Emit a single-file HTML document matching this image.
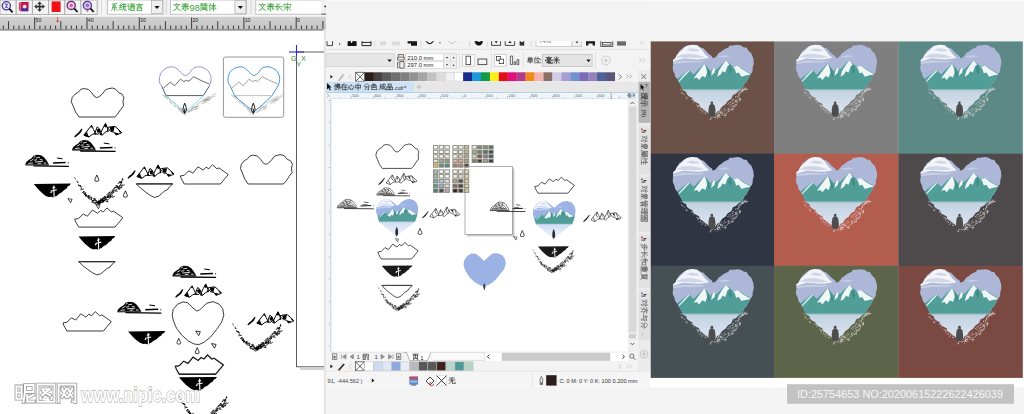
<!DOCTYPE html><html><head><meta charset="utf-8"><style>html,body{margin:0;padding:0}body{width:1024px;height:414px;overflow:hidden;background:#f4f4f4}svg{position:absolute;left:0;top:0;font-family:"Liberation Sans",sans-serif}</style></head><body>
<svg width="1024" height="414" viewBox="0 0 1024 414">
<defs>
<path id="ht" d="M8,29 L4.6,24 L2.2,18.2 L0.3,13.8 L1.2,9.5 L4.1,6.1 L7.5,4.1 L9.9,1.2 L13.3,0.6 L17.7,1.5 L20.6,4.6 L23,8 L25.4,9.5 L27.8,9 L31.2,6.1 L34.6,1.7 L38,0.6 L41.3,0 L44.7,1.2 L47.6,4.6 L51,6.1 L52.9,9.5 L52,13.3 L52.5,17.7 L49.6,21.5 L46.7,25.9 L43.8,29 Z"/>
<path id="mo" d="M4.3,19.6 L40.6,19.6 L48.5,10.2 L39.1,3.6 L36.9,4.4 L32.6,0.4 L29,4.4 L26.1,2.9 L23.2,5.8 L18.1,2.5 L13,8.7 L8.7,6.5 L4.3,10.9 L0.3,11.6 L1.4,14.5 Z"/>
<path id="lo" d="M0,0.5 L36.4,0.5 L34.5,2.5 L32.5,4 L31.5,6 L28.5,7.5 L25,10.5 L22,13 L18,14 L14,12 L9,8.5 L4,4.5 Z"/>
<path id="hf" d="M24.3,9.3 L19.8,5.5 L15.3,1 L10.8,0.3 L5.5,2.5 L1,7.8 L0,13.8 L1.4,19.8 L4.4,26.8 L9.6,33.6 L16.5,39.6 L22,42.4 L26.6,43 L32,40.6 L38.4,35.4 L44.6,27.6 L49.4,20.5 L51.6,13.8 L50.5,7 L46.8,2.5 L40.8,0 L34.8,1.5 L30.3,5.5 L27.3,8.5 Z"/>
<g id="lb"><path d="M0,0.7 L37,0.3 L35.8,2.2 L34,3 L33,5 L30.5,6.6 L28,9 L25,10.6 L23,12.6 L21.4,13 L21,14 L19,14 L17.6,13.4 L15,13.8 L12,12.6 L9.4,10.6 L6.4,8 L3.6,5 L1.4,2.4 Z" fill="#000"/><path d="M20,2.2 L20.3,14.2 M17,7.8 L23,6.4 M18.6,4.6L21.5,4 M16.5,9.2L18,8.8" stroke="#fff" stroke-width="1.1" fill="none"/></g>
<path id="dr" d="M2.4,0 L4.4,4.6 Q4.8,6.4 2.4,6.4 Q0,6.4 0.4,4.6 Z" fill="#fff" stroke="#000" stroke-width="0.8"/>
<path id="tr" d="M0,0 L4.6,0.8 L3,4.6 Z" fill="#fff" stroke="#000" stroke-width="0.8"/>
<g id="ms"><path d="M0.2,13.6 L2,11.5 L4,10 L6,7.5 L7.8,5.6 L8.5,6.4 L6.8,9.6 L4.8,11.6 L2.6,13.2 L1,14.4 Z" fill="#000"/><path d="M9.9,12.1 L17.5,2.3 L19.5,6.5 L21.4,10.3 L18,11.5 L14.9,14 Z" fill="#fff" stroke="#000" stroke-width="1"/><path d="M9.6,12.4 L13,8.6 L13.6,11 L15.2,14.2 L12,13.4 Z M17.5,2 L18.4,4.6 L16.4,4.2Z" fill="#000"/><path d="M20.6,10.8 L23.2,3.9 L25.6,6 L26.6,9 L24,11.2 Z" fill="#fff" stroke="#000" stroke-width="1"/><path d="M22.6,6.6 L25.6,5.6 L26.4,9.2 L23.4,9.8 Z M20,11.6 L22,9 L22.4,11.4Z" fill="#000"/><path d="M26,11.4 L29,5 L31.5,0.4 L33,3.5 L34.2,7.6 L31,9.5 L28,12.2 Z" fill="#fff" stroke="#000" stroke-width="1"/><path d="M29.8,3 L31.5,0 L33.2,3.8 L31.4,4.4Z M26,11.8 L27.4,9 L28.6,11.8Z M33,6 L35,8.4 L33.4,9Z" fill="#000"/><path d="M33.5,4.5 L37.2,3.7 L41,3.4 L44,6 L47.7,9.7 L45,11 L42,11.9 L40,9 L37,8.5 L35,6.6 Z" fill="#fff" stroke="#000" stroke-width="1"/><path d="M35.6,4.2 L40.6,3.8 L39.6,8.2 L36.8,8 Z M40.6,9.4 L44.8,10.2 L42,12.4 Z M44,6L47.9,9.8L45.6,9.4Z" fill="#000"/></g>
<g id="cs"><path d="M0,9.8 L1.5,7 L4,5 L6.5,3.5 L8.5,1 L12,0 L16,0.5 L19,2.5 L21,5 L23.4,8.6 L23.6,9.8 L12,9.6 Z" fill="#000"/><path d="M10,7.2 L18,6.5 M5,6.4 L8.4,4.4 M11,3.2 L15,2.4 M3.4,8.6L8,8.2 M14.6,4.6L17.6,5.2 M9,5.4 L12,5 M18.6,8.2 L21.4,8.4 M12.6,8.6 L16.4,8.4 M8.6,2.4 L10.4,1.6" stroke="#fff" stroke-width="0.85" fill="none"/><path d="M8.4,11.1 L43.8,11.5" stroke="#000" stroke-width="1.3"/><path d="M0.4,10.2 L24,10.2" stroke="#000" stroke-width="0.9"/><path d="M28,8.1 L40.7,7.6" stroke="#000" stroke-width="1.5"/><path d="M32,3.2 L37.6,4 M42.8,8 L43.8,8" stroke="#000" stroke-width="1"/></g>
<g id="msl"><path d="M0.2,13.6 L4,10 L7.8,5.6 L8.5,6.4 L4.8,11.6 L1,14.4 Z" fill="#000"/><path d="M9.9,12.1 L17.5,2.3 L19.5,6.5 L21.4,10.3 L18,11.5 L14.9,14 Z M12.6,9 L15,14 M17.5,2.3 L16.6,7 L19,9" fill="none" stroke="#000" stroke-width="0.75"/><path d="M20.6,10.8 L23.2,3.9 L25.6,6 L26.6,9 L24,11.2 Z M23.2,3.9 L24,8 " fill="none" stroke="#000" stroke-width="0.75"/><path d="M26,11.4 L29,5 L31.5,0.4 L33,3.5 L34.2,7.6 L31,9.5 L28,12.2 Z M31.5,0.4 L30.6,5 L32.4,8.6" fill="none" stroke="#000" stroke-width="0.75"/><path d="M33.5,4.5 L37.2,3.7 L41,3.4 L44,6 L47.7,9.7 L45,11 L42,11.9 L40,9 L37,8.5 L35,6.6 Z M37.2,3.7 L39.6,8 M41,3.4 L43,8 L45,11" fill="none" stroke="#000" stroke-width="0.75"/><path d="M36.4,4.4 L39.4,4.2 L39,7 Z M41,9.6 L44,10.4 L42,12 Z" fill="#000"/></g>
<g id="csl"><path d="M0,9.8 L1.5,7 L4,5 L6.5,3.5 L8.5,1 L12,0 L16,0.5 L19,2.5 L21,5 L23.4,8.6 M2,9 L5,6 L9,3 L13,2 L17,4 L20,7.4 M4.6,9 L8,5.6 L12,4 L16,6 L18.4,8.6 M7,9 L10.6,6.4 L14,6.6 L16,9 M10,0.6 L12,5 L14,9 M6.6,3.6 L9,7 M16,0.6 L15,5 M1,9.4 H23 M3,8 H21" fill="none" stroke="#000" stroke-width="0.7"/><path d="M0,10.3 L24,10.3" stroke="#000" stroke-width="0.9"/><path d="M8.4,11.2 L43.8,11.5" stroke="#000" stroke-width="1"/><path d="M28,8.1 L40.7,7.6" stroke="#000" stroke-width="1.2"/><path d="M32,3.2 L37.6,4 M30,6.6 L36,6.4 M42.8,8 L43.8,8" stroke="#000" stroke-width="0.8"/></g>
<g id="vr"><path d="M-23.1,-25.6l0.8,0.3M-22.7,-24.7l0.7,0.4M-21.0,-22.2l1.1,-0.2M-20.6,-21.1l1.5,0.1M-19.2,-18.9l0.5,0.5M-18.9,-18.6l-0.3,1.0M-18.4,-18.2l1.3,1.1M-18.3,-17.3l1.5,-0.5M-18.0,-17.8l1.1,0.3M-17.2,-17.0l1.2,0.2M-17.1,-15.4l1.0,-0.0M-16.6,-15.2l0.7,0.1M-16.2,-14.5l-0.6,1.4M-15.6,-13.8l1.7,-0.6M-14.1,-11.9l0.8,0.4M-14.9,-11.3l-0.1,0.9M-14.7,-11.7l1.3,-0.1M-13.3,-11.8l-0.8,1.5M-12.9,-11.0l0.8,0.4M-13.6,-10.3l0.0,1.1M-12.3,-9.9l-0.9,1.5M-12.6,-10.5l0.1,1.0M-12.8,-10.4l0.7,-0.3M-12.3,-8.9l0.4,1.8M-12.2,-10.0l-0.9,1.6M-12.3,-8.9l0.9,0.1M-11.5,-8.6l-0.5,1.6M-10.8,-7.8l-0.0,0.8M-11.0,-9.1l0.0,1.6M-10.0,-7.1l-0.0,1.1M-9.4,-7.4l1.0,0.6M-11.0,-6.8l0.9,-0.0M-9.2,-6.4l-0.0,0.9M-9.6,-8.2l0.4,1.1M-9.1,-7.0l1.7,-0.8M-8.3,-6.0l-0.5,1.1M-9.5,-7.3l1.0,0.1M-9.0,-7.4l0.5,0.9M-8.7,-6.0l-0.4,1.1M-7.2,-6.0l-0.4,1.1M-9.4,-6.0l0.8,1.1M-7.0,-6.5l0.7,0.0M-7.5,-5.9l1.1,1.1M-6.6,-6.4l0.9,1.1M-7.8,-4.2l0.5,0.8M-6.1,-3.6l0.9,1.0M-6.7,-4.6l1.1,0.9M-6.4,-4.6l0.3,1.2M-5.1,-2.9l-0.6,1.4M-4.6,-3.1l1.3,0.3M-6.0,-5.3l0.8,-0.1M-5.0,-2.9l0.8,0.1M-4.6,-3.1l-0.3,0.8M-3.5,-4.4l1.8,-0.2M-4.9,-1.6l-0.5,1.1M-4.9,-3.1l-0.1,0.9M-5.0,-2.2l0.9,0.4M-4.4,-4.5l1.2,-0.6M-3.9,-4.2l1.3,0.6M-2.0,-3.9l-0.8,1.4M-2.5,-3.2l0.7,0.2M-1.8,-1.0l1.2,-0.2M-1.5,-1.8l0.9,0.2M-4.6,-1.2l0.2,0.8M-0.9,-1.2l0.6,0.5M-1.0,-3.3l-0.0,0.8M-2.8,-1.2l-0.3,1.2M-3.5,-1.2l-0.4,1.0M-3.1,-3.0l0.8,0.1M-2.3,0.1l1.1,0.1M-2.7,-1.5l1.2,0.4M-3.1,0.3l0.9,-0.4M-1.0,1.3l0.5,0.8M-0.9,-0.4l1.7,-0.3M-0.4,0.5l-0.2,1.2M1.3,0.8l-0.5,1.0M-0.7,-2.0l0.4,1.1M1.3,-1.7l-0.0,-2.0M1.5,-0.9l2.2,-0.1M3.1,-2.1l0.6,-1.4M4.8,-3.1l2.3,0.5M21.6,-21.0l0.6,-1.2M9.7,-8.1l0.8,-0.7M3.2,-3.9l0.0,-1.4M5.7,-1.7l0.5,-1.7M14.1,-11.0l2.1,-0.6M24.7,-23.3l0.3,-1.9M20.6,-14.4l1.8,0.1M2.9,-0.0l1.3,-1.0M20.1,-14.6l1.9,-1.2M3.5,-3.1l-0.1,-1.0M20.2,-15.0l1.5,-1.0M11.1,-5.9l-0.3,-2.1M12.3,-8.2l0.8,-0.4M0.4,0.2l0.7,-1.8M23.8,-20.1l1.0,-0.9M16.0,-15.1l1.6,-0.9M4.6,-3.8l1.3,-0.3M1.1,0.1l0.7,-1.7M5.1,-4.0l1.2,-1.0M23.1,-20.0l0.6,-2.3M9.1,-6.5l2.3,-0.2M3.7,-2.7l1.1,0.2M12.4,-6.7l1.0,0.2M22.7,-17.7l1.1,-0.4M0.2,-0.5l-0.2,-1.6M2.9,-2.2l0.7,-1.1M18.9,-12.0l1.0,-0.0M21.2,-15.9l0.6,-1.3M11.7,-10.6l0.8,-1.3M2.4,-1.2l1.3,-0.1M4.3,-0.5l0.8,-0.7M22.7,-15.5l1.8,-0.2M12.7,-7.6l0.8,-0.2M15.4,-11.1l1.1,-0.5M1.4,-0.1l1.0,-1.0M23.1,-20.6l0.7,-1.7M6.5,-2.3l0.2,-1.0M12.4,-6.4l0.6,-2.2M1.7,-2.0l0.2,-0.9M5.3,-1.0l0.6,-1.6M7.6,-5.2l1.0,-1.3M0.0,-0.3l0.9,-2.2M12.8,-10.6l1.1,0.0M9.2,-2.5l1.6,-1.7M0.9,-0.1l-0.2,-1.9M14.6,-6.6l-0.2,-1.4M18.7,-18.0l1.2,0.3M11.9,-5.9l2.2,-0.8M15.8,-12.1l1.2,-1.2M3.4,-3.1l1.8,0.2M3.2,-3.6l1.7,-0.8M9.8,-6.2l1.2,-0.8M0.9,0.3l0.7,-1.4M20.1,-15.4l0.8,-0.8M15.9,-10.7l0.4,-0.7M10.1,-5.9l0.7,-1.7M0.7,-0.7l0.7,-1.3M17.4,-12.3l1.6,-0.4M4.7,-1.8l1.2,-0.1M4.3,-3.7l1.6,0.3M6.8,-5.0l2.1,-0.9M2.3,-3.0l1.0,0.2M8.6,-1.9l2.2,0.2M24.2,-18.1l0.5,-1.0M0.1,-0.4l1.3,-0.5M2.3,0.2l-0.2,-1.2M1.5,0.1l1.1,0.2M19.1,-15.9l0.6,-0.7M23.7,-20.9l0.3,-1.3M6.2,-6.6l2.0,-0.2M1.3,0.6l1.2,0.1M6.8,-4.2l0.9,-2.2M14.1,-10.7l0.6,-1.1M20.2,-19.9l2.1,-1.0M9.2,-6.9l2.3,0.4M7.3,-3.3l1.7,-1.5M17.3,-13.4l2.0,-0.2M4.4,-4.2l1.1,-1.7M15.4,-12.8l0.3,-0.9M7.8,-4.0l2.2,0.5M1.5,-0.5l0.1,-1.6M4.5,-1.0l1.1,-1.4M21.3,-17.1l0.9,-0.4M10.8,-9.0l1.1,-1.6M4.5,-2.6l0.3,-2.2M6.7,-2.8l1.6,0.4M14.3,-8.4l0.9,0.2M19.0,-17.7l0.9,0.1M4.3,-1.7l1.7,0.4M21.7,-14.8l0.8,-0.9M0.9,-0.9l1.5,-0.9M2.4,-0.4l0.3,-1.2M3.9,-2.5l-0.2,-1.3M5.9,-4.6l0.5,-2.0M1.7,-1.6l1.0,-1.4M2.0,-1.6l1.4,-0.5M22.6,-20.4l0.8,-1.5M19.3,-15.8l1.3,0.4M3.2,-0.4l-0.3,-2.2M6.6,-6.6l1.5,0.1M9.9,-6.7l2.0,-1.0M6.3,-3.6l0.8,-0.7M23.5,-16.9l0.1,-1.6M4.6,-1.5l0.2,-2.3M1.4,0.1l1.4,0.2M18.2,-15.8l0.3,-2.0M18.9,-16.6l1.1,-0.1M9.7,-5.5l0.6,-0.8" stroke="#000" stroke-width="0.9" fill="none"/><path d="M22.9,-20.5l2.7,-3.8M20.8,-16.2l2.9,-3.8M11.0,-6.3l3.4,-3.3M14.5,-9.5l2.2,-2.1M10.0,-7.7l4.4,-3.0M13.9,-12.0l2.0,-2.7M14.5,-11.5l2.3,-2.1M16.5,-14.7l3.8,-2.5M14.5,-5.7l3.0,-1.6M21.3,-14.8l3.0,-1.9M24.1,-17.1l3.0,-1.7M5.5,-1.8l3.7,-3.8M10.9,-4.5l2.9,-1.8M8.8,-8.1l3.0,-3.4" stroke="#000" stroke-width="0.7" fill="none"/></g>
<g id="vrl"><path d="M-23.1,-25.6l0.8,0.3M-22.7,-24.7l0.7,0.4M-21.0,-22.2l1.1,-0.2M-20.6,-21.1l1.5,0.1M-19.2,-18.9l0.5,0.5M-18.9,-18.6l-0.3,1.0M-18.4,-18.2l1.3,1.1M-18.3,-17.3l1.5,-0.5M-18.0,-17.8l1.1,0.3M-17.2,-17.0l1.2,0.2M-17.1,-15.4l1.0,-0.0M-16.6,-15.2l0.7,0.1M-16.2,-14.5l-0.6,1.4M-15.6,-13.8l1.7,-0.6M-14.1,-11.9l0.8,0.4M-14.9,-11.3l-0.1,0.9M-14.7,-11.7l1.3,-0.1M-13.3,-11.8l-0.8,1.5M-12.9,-11.0l0.8,0.4M-13.6,-10.3l0.0,1.1M-12.3,-9.9l-0.9,1.5M-12.6,-10.5l0.1,1.0M-12.8,-10.4l0.7,-0.3M-12.3,-8.9l0.4,1.8M-12.2,-10.0l-0.9,1.6M-12.3,-8.9l0.9,0.1M-11.5,-8.6l-0.5,1.6M-10.8,-7.8l-0.0,0.8M-11.0,-9.1l0.0,1.6M-10.0,-7.1l-0.0,1.1M-9.4,-7.4l1.0,0.6M-11.0,-6.8l0.9,-0.0M-9.2,-6.4l-0.0,0.9M-9.6,-8.2l0.4,1.1M-9.1,-7.0l1.7,-0.8M-8.3,-6.0l-0.5,1.1M-9.5,-7.3l1.0,0.1M-9.0,-7.4l0.5,0.9M-8.7,-6.0l-0.4,1.1M-7.2,-6.0l-0.4,1.1M-9.4,-6.0l0.8,1.1M-7.0,-6.5l0.7,0.0M-7.5,-5.9l1.1,1.1M-6.6,-6.4l0.9,1.1M-7.8,-4.2l0.5,0.8M-6.1,-3.6l0.9,1.0M-6.7,-4.6l1.1,0.9M-6.4,-4.6l0.3,1.2M-5.1,-2.9l-0.6,1.4M-4.6,-3.1l1.3,0.3M-6.0,-5.3l0.8,-0.1M-5.0,-2.9l0.8,0.1M-4.6,-3.1l-0.3,0.8M-3.5,-4.4l1.8,-0.2M-4.9,-1.6l-0.5,1.1M-4.9,-3.1l-0.1,0.9M-5.0,-2.2l0.9,0.4M-4.4,-4.5l1.2,-0.6M-3.9,-4.2l1.3,0.6M-2.0,-3.9l-0.8,1.4M-2.5,-3.2l0.7,0.2M-1.8,-1.0l1.2,-0.2M-1.5,-1.8l0.9,0.2M-4.6,-1.2l0.2,0.8M-0.9,-1.2l0.6,0.5M-1.0,-3.3l-0.0,0.8M-2.8,-1.2l-0.3,1.2M-3.5,-1.2l-0.4,1.0M-3.1,-3.0l0.8,0.1M-2.3,0.1l1.1,0.1M-2.7,-1.5l1.2,0.4M-3.1,0.3l0.9,-0.4M-1.0,1.3l0.5,0.8M-0.9,-0.4l1.7,-0.3M-0.4,0.5l-0.2,1.2M1.3,0.8l-0.5,1.0M-0.7,-2.0l0.4,1.1M1.3,-1.7l-0.0,-2.0M1.5,-0.9l2.2,-0.1M3.1,-2.1l0.6,-1.4M4.8,-3.1l2.3,0.5M21.6,-21.0l0.6,-1.2M9.7,-8.1l0.8,-0.7M3.2,-3.9l0.0,-1.4M5.7,-1.7l0.5,-1.7M14.1,-11.0l2.1,-0.6M24.7,-23.3l0.3,-1.9M20.6,-14.4l1.8,0.1M2.9,-0.0l1.3,-1.0M20.1,-14.6l1.9,-1.2M3.5,-3.1l-0.1,-1.0M20.2,-15.0l1.5,-1.0M11.1,-5.9l-0.3,-2.1M12.3,-8.2l0.8,-0.4M0.4,0.2l0.7,-1.8M23.8,-20.1l1.0,-0.9M16.0,-15.1l1.6,-0.9M4.6,-3.8l1.3,-0.3M1.1,0.1l0.7,-1.7M5.1,-4.0l1.2,-1.0M23.1,-20.0l0.6,-2.3M9.1,-6.5l2.3,-0.2M3.7,-2.7l1.1,0.2M12.4,-6.7l1.0,0.2M22.7,-17.7l1.1,-0.4M0.2,-0.5l-0.2,-1.6M2.9,-2.2l0.7,-1.1M18.9,-12.0l1.0,-0.0M21.2,-15.9l0.6,-1.3M11.7,-10.6l0.8,-1.3M2.4,-1.2l1.3,-0.1M4.3,-0.5l0.8,-0.7M22.7,-15.5l1.8,-0.2M12.7,-7.6l0.8,-0.2M15.4,-11.1l1.1,-0.5M1.4,-0.1l1.0,-1.0M23.1,-20.6l0.7,-1.7M6.5,-2.3l0.2,-1.0M12.4,-6.4l0.6,-2.2M1.7,-2.0l0.2,-0.9M5.3,-1.0l0.6,-1.6M7.6,-5.2l1.0,-1.3M0.0,-0.3l0.9,-2.2M12.8,-10.6l1.1,0.0M9.2,-2.5l1.6,-1.7M0.9,-0.1l-0.2,-1.9M14.6,-6.6l-0.2,-1.4M18.7,-18.0l1.2,0.3M11.9,-5.9l2.2,-0.8M15.8,-12.1l1.2,-1.2M3.4,-3.1l1.8,0.2M3.2,-3.6l1.7,-0.8M9.8,-6.2l1.2,-0.8M0.9,0.3l0.7,-1.4M20.1,-15.4l0.8,-0.8M15.9,-10.7l0.4,-0.7M10.1,-5.9l0.7,-1.7M0.7,-0.7l0.7,-1.3M17.4,-12.3l1.6,-0.4M4.7,-1.8l1.2,-0.1M4.3,-3.7l1.6,0.3M6.8,-5.0l2.1,-0.9M2.3,-3.0l1.0,0.2M8.6,-1.9l2.2,0.2M24.2,-18.1l0.5,-1.0M0.1,-0.4l1.3,-0.5M2.3,0.2l-0.2,-1.2M1.5,0.1l1.1,0.2M19.1,-15.9l0.6,-0.7M23.7,-20.9l0.3,-1.3M6.2,-6.6l2.0,-0.2M1.3,0.6l1.2,0.1M6.8,-4.2l0.9,-2.2M14.1,-10.7l0.6,-1.1M20.2,-19.9l2.1,-1.0M9.2,-6.9l2.3,0.4M7.3,-3.3l1.7,-1.5M17.3,-13.4l2.0,-0.2M4.4,-4.2l1.1,-1.7M15.4,-12.8l0.3,-0.9M7.8,-4.0l2.2,0.5M1.5,-0.5l0.1,-1.6M4.5,-1.0l1.1,-1.4M21.3,-17.1l0.9,-0.4M10.8,-9.0l1.1,-1.6M4.5,-2.6l0.3,-2.2M6.7,-2.8l1.6,0.4M14.3,-8.4l0.9,0.2M19.0,-17.7l0.9,0.1M4.3,-1.7l1.7,0.4M21.7,-14.8l0.8,-0.9M0.9,-0.9l1.5,-0.9M2.4,-0.4l0.3,-1.2M3.9,-2.5l-0.2,-1.3M5.9,-4.6l0.5,-2.0M1.7,-1.6l1.0,-1.4M2.0,-1.6l1.4,-0.5M22.6,-20.4l0.8,-1.5M19.3,-15.8l1.3,0.4M3.2,-0.4l-0.3,-2.2M6.6,-6.6l1.5,0.1M9.9,-6.7l2.0,-1.0M6.3,-3.6l0.8,-0.7M23.5,-16.9l0.1,-1.6M4.6,-1.5l0.2,-2.3M1.4,0.1l1.4,0.2M18.2,-15.8l0.3,-2.0M18.9,-16.6l1.1,-0.1M9.7,-5.5l0.6,-0.8" stroke="#000" stroke-width="0.75" fill="none"/><path d="M22.9,-20.5l2.7,-3.8M20.8,-16.2l2.9,-3.8M11.0,-6.3l3.4,-3.3M14.5,-9.5l2.2,-2.1M10.0,-7.7l4.4,-3.0M13.9,-12.0l2.0,-2.7M14.5,-11.5l2.3,-2.1M16.5,-14.7l3.8,-2.5M14.5,-5.7l3.0,-1.6M21.3,-14.8l3.0,-1.9M24.1,-17.1l3.0,-1.7M5.5,-1.8l3.7,-3.8M10.9,-4.5l2.9,-1.8M8.8,-8.1l3.0,-3.4" stroke="#000" stroke-width="0.55" fill="none"/></g>
<clipPath id="hc"><path d="M40.70,13.68 L39.74,11.51 L37.79,10.19 L36.32,9.04 L34.05,6.68 L33.07,5.68 L31.19,3.75 L29.04,3.09 L27.00,1.89 L25.34,0.42 L21.98,0.51 L20.58,-0.13 L17.39,0.58 L14.78,1.03 L12.83,2.00 L10.81,3.25 L8.99,5.06 L7.27,6.12 L6.07,8.26 L4.36,10.25 L3.24,13.40 L0.78,15.22 L1.04,18.03 L0.88,20.11 L0.36,22.79 L0.68,25.43 L2.22,28.45 L2.71,30.90 L3.46,32.57 L5.58,34.81 L6.17,37.00 L8.02,39.19 L8.80,41.13 L10.08,43.71 L11.22,45.48 L13.99,47.08 L14.80,49.72 L17.13,51.50 L19.88,52.84 L21.30,55.63 L22.90,57.04 L26.80,58.91 L27.72,61.50 L29.09,62.76 L32.35,64.85 L35.50,67.66 L37.91,69.95 L40.62,72.26 L43.34,69.42 L45.07,66.52 L47.11,65.81 L48.88,63.17 L50.01,61.58 L53.24,59.43 L55.64,56.14 L59.12,53.95 L60.88,50.10 L64.04,48.69 L66.80,45.73 L68.73,44.60 L70.13,43.48 L71.83,40.80 L72.35,38.89 L74.40,37.30 L74.93,35.88 L76.43,33.43 L77.25,31.88 L78.28,29.55 L79.91,27.70 L80.50,25.67 L80.64,22.84 L81.55,19.89 L81.67,17.94 L81.31,14.41 L80.62,12.32 L79.17,8.67 L77.58,7.41 L75.86,5.36 L74.70,3.15 L71.46,2.59 L69.36,1.05 L66.00,0.16 L63.45,0.42 L60.64,0.81 L57.61,0.78 L56.21,2.78 L53.09,4.13 L50.69,5.58 L49.13,6.94 L46.56,8.43 L45.22,10.39 L43.30,12.61 Z"/></clipPath>
<clipPath id="hm"><path d="M41.1,13.3 L34.5,7.2 L27.3,1.4 L20.1,0 L12.9,2 L5.7,8.2 L1.2,15.4 L0,22.6 L1.6,30 L4.2,37.4 L6.6,45.2 L14,52 L23,60 L32,67.6 L40.2,73.9 L48,67.6 L57,60 L66,52.6 L75.4,45.2 L78.4,37 L80.9,28 L82.1,17.5 L79.7,9.2 L74.5,3.1 L66.3,0 L58.1,1 L50.9,5.1 L44.8,10.9 Z"/></clipPath>
<linearGradient id="lk" x1="0" y1="0" x2="0" y2="1"><stop offset="0" stop-color="#c2d1e2"/><stop offset="0.5" stop-color="#d3deea"/><stop offset="1" stop-color="#e0e7f0"/></linearGradient>
<g id="scene"><rect x="0" y="0" width="83" height="46" fill="#adb7d8"/><path d="M0,15.4 L1.9,14.3 L5.9,8.9 L11.3,4.2 L15.4,0 L23.5,0 L28.9,4.2 L32.9,9.6 L37,13.3 L30,14.4 L24.8,14.7 L11.3,13.8 L0,17 Z" fill="#f3f4f8"/><path d="M4,12.4 L10,9.6 L18,9 L26,10.4 L33,12.6 L24,13.4 L12,13 Z M14,5.4 L19,3.6 L25,4.4 L28,6.4 L21,6.8Z" fill="#d0d6e6"/><path d="M0,17.4 L12,15.6 L26,16.2 L34,15.6 L28,17.6 L12,18 L0,19.2 Z" fill="#c8cfe3"/><path d="M45,12 L52,10.6 L58.6,11.4 L52,12.8 Z" fill="#c8cfe3"/><path d="M0,38 L4.6,34.6 L10,30.2 L16.7,25.1 L21.4,29.8 L26,25 L32.3,19 L35.4,22.6 L38.3,26.5 L41.7,22.4 L44.4,25.1 L49,20.4 L53.9,15.6 L57.6,19 L61.3,22.4 L65.4,21 L70.8,24.4 L78.9,29.2 L83,31 L83,46 L0,46 Z" fill="#519d98"/><path d="M32.3,19 L28.2,24.4 L24.2,29.8 L21.4,33.6 L24.8,32.8 L26.9,35.2 L30.2,31.2 L33.2,32.8 L35,27.8 L34,23.1 Z" fill="#eef6f6"/><path d="M41.7,22.4 L39.7,26.5 L39,31.2 L42.4,27.8 L43.1,24.4 Z" fill="#eef6f6"/><path d="M53.9,15.6 L49.8,21 L46.4,26.5 L45.1,31.9 L48.5,29.8 L50.5,26.5 L53.2,27.8 L55.2,21.7 L57.3,19.7 Z" fill="#eef6f6"/><path d="M61.3,22.4 L65.4,21 L70.8,25.1 L78.9,29.8 L74.2,30.5 L69.4,31.9 L66.7,27.8 L64,28.5 L62.7,24.4 Z" fill="#eef6f6"/><path d="M16.7,25.1 L11,30.6 L5.9,36.6 L7.4,36.6 L12.4,31.6 L17.4,26.4Z" fill="#d4ecea"/><path d="M36,24 L38,30 L36.8,33 L35.4,28Z M57.6,19.4 L59.6,26 L58,30 L56.4,24Z" fill="#3f8a86"/><rect x="0" y="44.6" width="83" height="31.6" fill="url(#lk)"/><rect x="0" y="44.2" width="83" height="1.2" fill="#86b8b8" opacity="0.7"/></g>
<linearGradient id="lk2" x1="0" y1="0" x2="0" y2="1"><stop offset="0" stop-color="#cfdcf2"/><stop offset="0.6" stop-color="#e6edf9"/><stop offset="1" stop-color="#f4f7fc"/></linearGradient>
<g id="scene2"><rect x="0" y="0" width="83" height="46" fill="#9db3e6"/><path d="M0,15.4 L1.9,14.3 L5.9,8.9 L11.3,4.2 L15.4,0 L23.5,0 L28.9,4.2 L32.9,9.6 L37,13.3 L30,14.4 L24.8,14.7 L11.3,13.8 L0,17 Z" fill="#f4f6fb"/><path d="M4,12.4 L10,9.6 L18,9 L26,10.4 L33,12.6 L24,13.4 L12,13 Z M14,5.4 L19,3.6 L25,4.4 L28,6.4 L21,6.8Z" fill="#d4def3"/><path d="M0,17.4 L12,15.6 L26,16.2 L34,15.6 L28,17.6 L12,18 L0,19.2 Z" fill="#c3d2f0"/><path d="M45,12 L52,10.6 L58.6,11.4 L52,12.8 Z" fill="#c3d2f0"/><path d="M0,38 L4.6,34.6 L10,30.2 L16.7,25.1 L21.4,29.8 L26,25 L32.3,19 L35.4,22.6 L38.3,26.5 L41.7,22.4 L44.4,25.1 L49,20.4 L53.9,15.6 L57.6,19 L61.3,22.4 L65.4,21 L70.8,24.4 L78.9,29.2 L83,31 L83,46 L0,46 Z" fill="#519d98"/><path d="M32.3,19 L28.2,24.4 L24.2,29.8 L21.4,33.6 L24.8,32.8 L26.9,35.2 L30.2,31.2 L33.2,32.8 L35,27.8 L34,23.1 Z" fill="#eef6f6"/><path d="M41.7,22.4 L39.7,26.5 L39,31.2 L42.4,27.8 L43.1,24.4 Z" fill="#eef6f6"/><path d="M53.9,15.6 L49.8,21 L46.4,26.5 L45.1,31.9 L48.5,29.8 L50.5,26.5 L53.2,27.8 L55.2,21.7 L57.3,19.7 Z" fill="#eef6f6"/><path d="M61.3,22.4 L65.4,21 L70.8,25.1 L78.9,29.8 L74.2,30.5 L69.4,31.9 L66.7,27.8 L64,28.5 L62.7,24.4 Z" fill="#eef6f6"/><path d="M16.7,25.1 L11,30.6 L5.9,36.6 L7.4,36.6 L12.4,31.6 L17.4,26.4Z" fill="#d4ecea"/><path d="M36,24 L38,30 L36.8,33 L35.4,28Z M57.6,19.4 L59.6,26 L58,30 L56.4,24Z" fill="#3f8a86"/><rect x="0" y="44.6" width="83" height="31.6" fill="url(#lk2)"/><rect x="0" y="44.2" width="83" height="1.2" fill="#86b8b8" opacity="0.7"/></g>
<g id="rocks"><path d="M58.5,62.1l1.6,-0.5M60.4,60.6l0.7,-0.4M65.0,57.6l0.6,-0.8M46.3,72.3l1.3,-1.2M73.9,44.8l1.3,-0.3M45.8,67.8l1.1,-1.2M47.7,67.7l0.5,-0.5M60.2,64.4l1.1,-0.2M60.6,61.3l1.0,-0.8M74.4,44.4l1.5,-0.1M52.0,64.2l0.8,-1.2M66.3,50.6l1.5,-0.6M72.8,45.2l0.5,-0.9M70.3,45.8l1.7,-0.6M44.8,72.0l1.4,-0.8M44.3,70.7l1.7,-0.0M45.2,69.6l0.6,-1.2M66.4,48.9l1.2,-0.5M50.2,70.0l0.7,-0.2M45.8,70.3l0.8,-0.8M73.1,44.7l0.9,0.2M49.2,67.8l1.5,-0.2M47.5,72.9l0.8,-0.9M66.2,50.1l0.9,-1.2M45.3,71.4l0.8,-0.3M55.2,63.8l1.7,-0.5M64.1,60.1l0.7,-1.0M71.1,46.7l0.8,-1.0M68.0,53.9l0.7,0.3M69.7,46.9l1.0,-1.1M44.5,73.7l0.8,-0.1M53.4,69.1l1.2,-0.8M49.5,70.2l0.6,-0.9M63.6,60.6l1.2,-0.8M70.0,45.1l0.5,-0.8M55.4,59.6l0.7,-0.7M59.7,56.0l0.9,0.2M73.0,44.1l1.3,-0.3M45.3,68.4l0.5,0.2M67.5,55.7l0.5,-0.2M60.6,62.3l0.9,0.4M44.6,71.6l1.4,0.2M66.8,52.9l1.5,0.3M56.0,65.8l1.6,0.2M59.0,64.7l1.5,-0.3M62.4,55.5l1.2,-0.3M45.1,71.9l1.7,0.2M65.2,51.9l1.4,-0.3M60.1,64.4l0.6,-0.0M42.9,72.8l1.1,-0.9M65.0,53.5l1.2,0.3M49.0,65.0l0.9,-0.1M47.9,67.1l1.6,-0.2M60.6,64.7l0.9,-0.2M48.9,68.3l1.5,0.3M69.2,46.5l1.2,-0.8M46.8,70.1l1.5,0.1M67.6,55.2l0.8,-1.0M56.7,60.5l0.8,-0.6M63.1,56.0l0.9,0.1M72.6,43.6l0.6,-1.2M68.3,46.1l1.4,-0.3M55.2,67.6l0.5,-1.1M55.5,59.2l1.5,-0.9M45.3,68.4l1.3,-0.5M64.1,56.8l1.5,0.3M63.3,52.7l1.1,-1.0M41.8,72.9l1.4,-1.0M51.1,66.0l1.3,-0.4M64.4,57.9l1.0,0.0M69.4,45.2l1.6,-0.1M46.4,70.1l1.3,0.2M56.1,64.4l1.6,0.1M71.4,44.8l1.3,-1.0M67.1,54.1l1.3,-0.1M52.1,70.5l1.7,0.4M62.6,60.9l0.9,0.2M68.4,47.3l0.6,-0.6M62.8,60.3l1.1,-1.3M66.4,48.2l1.5,-1.0M56.2,67.0l0.7,-1.0M61.6,61.2l1.5,-0.1M71.5,44.8l1.6,-1.2M50.3,68.2l0.8,-0.1M63.6,55.7l1.5,-0.3M52.7,65.1l1.5,0.2M51.6,70.3l1.7,-0.4M60.0,56.3l1.1,-0.4M60.2,54.6l1.7,-0.4M58.6,65.3l1.2,-0.5M63.0,52.0l1.1,-0.6M72.9,45.5l0.8,-0.5M46.2,70.1l1.5,0.2M57.7,59.9l0.7,-0.2M70.1,44.7l1.4,-1.3M47.8,67.5l1.3,-0.8M55.7,65.3l0.6,-0.1M46.4,70.4l0.8,-1.0M60.1,58.9l1.0,-0.6M58.5,57.5l0.7,-0.2M63.6,55.8l1.5,-0.3M68.2,47.0l1.4,0.1M69.7,45.7l0.9,0.3M53.0,71.0l1.6,-1.1M52.1,68.9l0.8,-1.1M68.0,48.3l1.4,-1.1M57.8,64.4l0.5,-1.0M66.8,56.2l1.7,-1.1M61.5,61.8l1.1,-0.1M47.0,67.1l0.6,-1.2M61.2,58.7l1.2,-1.1M47.4,67.7l1.5,0.4M70.1,44.6l0.6,0.3M60.3,63.2l0.9,-0.5M59.6,59.4l1.2,-1.3M66.8,55.0l0.7,-0.5M65.6,51.6l0.7,-1.0M57.3,57.4l1.6,0.1M67.0,55.0l1.3,-0.6M62.4,57.0l1.7,0.1M14.3,53.0l1.1,0.6M33.1,67.8l1.2,0.7M28.4,65.3l1.1,0.1M31.0,64.4l0.7,0.2M8.2,44.4l1.0,0.4M13.4,52.3l1.0,0.0M27.8,63.7l0.9,0.1M38.2,73.8l1.0,0.6M39.2,71.8l1.0,0.6M15.7,51.6l0.4,-0.1M20.1,54.4l0.6,0.8M24.6,60.4l1.3,0.3M38.1,73.6l1.1,-0.3M25.4,62.4l0.4,0.8M12.5,49.0l0.6,0.2M27.6,61.2l1.3,0.1M23.6,59.9l0.7,-0.0M27.7,63.6l0.7,0.5M17.8,52.0l0.6,-0.3M11.6,49.6l0.8,0.8M31.9,65.1l1.3,0.8M8.6,47.6l0.8,0.2M38.5,72.1l0.9,0.8M30.1,65.3l1.3,0.7M27.2,61.1l1.0,0.2M14.9,49.3l0.9,-0.2M20.8,57.7l0.8,-0.1M25.8,61.1l1.1,0.3M37.3,74.6l1.1,-0.1M9.9,48.8l1.1,0.4M19.2,54.3l1.0,0.3M25.5,61.9l1.1,-0.2M13.8,52.9l1.2,0.7M9.7,44.6l0.6,0.2M27.9,61.6l0.9,-0.3M9.6,47.4l0.9,0.4M19.1,55.2l0.6,0.0M29.7,66.9l0.5,-0.2M32.3,68.2l1.1,-0.1M21.3,56.2l1.1,0.1M26.4,64.7l0.7,0.3M29.5,67.2l0.8,0.1M9.4,48.2l0.5,-0.3M25.1,60.8l1.0,-0.0M32.7,66.0l0.6,0.5" stroke="#e4dedc" stroke-width="0.95" opacity="0.6" fill="none"/></g>
<g id="person"><circle cx="39.7" cy="57.9" r="1.35"/><path d="M38.6,59 L40.8,59 L42.6,60.8 L43.2,64.4 L43.4,68.6 L42.6,70.8 L40,72.2 L37.2,70.8 L36.2,68.6 L36.4,64.4 L37,60.8 Z"/></g>
</defs>
<rect x="0.00" y="0.00" width="1024.00" height="414.00" fill="#f4f4f4" />
<rect x="0.00" y="0.00" width="324.00" height="414.00" fill="#ffffff" />
<rect x="323.70" y="0.00" width="2.30" height="414.00" fill="#e6e6e6" />
<rect x="0.00" y="0.00" width="324.00" height="15.50" fill="#f0f0f0" />
<rect x="0.00" y="0.00" width="16.20" height="14.40" fill="#f4f4f4" stroke="#aaaaaa" stroke-width="0.9"/>
<rect x="16.20" y="0.00" width="16.20" height="14.40" fill="#f4f4f4" stroke="#aaaaaa" stroke-width="0.9"/>
<rect x="32.40" y="0.00" width="16.20" height="14.40" fill="#f4f4f4" stroke="#aaaaaa" stroke-width="0.9"/>
<rect x="48.60" y="0.00" width="16.20" height="14.40" fill="#f4f4f4" stroke="#aaaaaa" stroke-width="0.9"/>
<rect x="64.80" y="0.00" width="16.20" height="14.40" fill="#f4f4f4" stroke="#aaaaaa" stroke-width="0.9"/>
<rect x="81.00" y="0.00" width="16.20" height="14.40" fill="#f4f4f4" stroke="#aaaaaa" stroke-width="0.9"/>
<circle cx="6.3" cy="5.8" r="4.1" fill="#e8e4f8" stroke="#4a3a8a" stroke-width="1.3"/>
<line x1="9.30" y1="8.80" x2="12.60" y2="12.40" stroke="#111" stroke-width="1.8" />
<path d="M5,4.2 L7.4,4.2 L5.6,7.4 L7.8,7.4" stroke="#3344cc" stroke-width="1" fill="none"/>
<rect x="20.40" y="2.00" width="8.00" height="9.40" fill="#a0206a" />
<rect x="21.40" y="2.00" width="7.00" height="6.20" fill="#c81848" />
<rect x="22.00" y="8.00" width="6.00" height="3.00" fill="#4030a0" />
<circle cx="24.6" cy="6.6" r="1.9" fill="#f4e0f0"/>
<rect x="18.80" y="2.50" width="1.30" height="8.00" fill="#d04070" />
<path d="M39.6,1.4 L42,4 L40.4,4 L40.4,5.8 L42.4,5.8 L42.4,4.2 L45,6.6 L42.4,9 L42.4,7.4 L40.4,7.4 L40.4,9.2 L42,9.2 L39.6,11.8 L37.2,9.2 L38.8,9.2 L38.8,7.4 L36.8,7.4 L36.8,9 L34.2,6.6 L36.8,4.2 L36.8,5.8 L38.8,5.8 L38.8,4 L37.2,4 Z" fill="#333"/>
<rect x="51.60" y="1.40" width="9.00" height="10.60" fill="#f01018" />
<circle cx="71.2" cy="5.4" r="4.1" fill="#f0c8e0" stroke="#5a2a80" stroke-width="1.3"/>
<line x1="74.20" y1="8.40" x2="77.50" y2="12.00" stroke="#111" stroke-width="1.8" />
<circle cx="71.2" cy="5.4" r="1.6" fill="#e050a0"/>
<circle cx="87.4" cy="5.4" r="4.1" fill="#d8c8f0" stroke="#5a3a90" stroke-width="1.3"/>
<line x1="90.40" y1="8.40" x2="93.70" y2="12.00" stroke="#111" stroke-width="1.8" />
<circle cx="87.4" cy="5.4" r="1.8" fill="#9070d0"/>
<path d="M86,10.4 L88.8,10.4 L87.4,12 Z" fill="#e02040"/>
<rect x="100.00" y="0.00" width="5.00" height="15.00" fill="#f6f6f6" />
<line x1="101.50" y1="0.00" x2="101.50" y2="14.50" stroke="#cfcfcf" stroke-width="0.8" />
<rect x="107.50" y="0.00" width="55.50" height="14.20" fill="#ffffff" stroke="#b8b8b8" stroke-width="0.8"/>
<rect x="151.50" y="0.60" width="11.00" height="13.00" fill="#efefef" stroke="#b0b0b0" stroke-width="0.7"/>
<path d="M154.4,6 L159.6,6 L157.0,9 Z" fill="#111"/>
<path d="M112.06,4.14L116.74,3.59M114.79,4.14L112.84,5.93M112.84,5.93L115.57,5.77M115.57,5.77L112.45,7.88M112.45,7.88L116.74,7.65M114.40,7.88L114.40,10.84M112.61,8.97L111.44,10.38M116.12,8.97L117.36,10.38M121.19,3.59L119.78,5.54M119.78,5.54L121.34,5.54M121.34,5.54L119.63,7.88M119.63,7.88L121.65,7.49M119.31,9.91L121.65,8.97M124.15,3.36L124.15,4.37M122.36,4.60L126.26,4.60M123.92,4.76L122.75,6.71M122.75,6.71L125.87,6.48M125.09,5.54L125.87,6.71M123.53,7.10L123.53,9.05M123.53,9.05L122.12,10.61M124.93,7.10L124.93,10.22M124.93,10.22L126.41,10.22M128.28,3.67L128.91,4.60M127.50,5.93L128.91,5.93M128.91,5.93L128.91,9.91M128.91,9.91L129.92,8.82M130.31,3.98L134.60,3.98M132.26,3.98L131.48,6.71M130.94,5.38L134.06,5.38M134.06,5.38L134.06,6.71M130.16,6.71L134.84,6.71M130.94,7.88L134.21,7.88M130.94,7.88L130.94,10.61M134.21,7.88L134.21,10.61M130.94,10.38L134.21,10.38M139.28,3.36L139.83,4.14M136.16,4.60L142.71,4.60M137.49,5.85L141.39,5.85M137.49,6.94L141.39,6.94M137.25,8.04L141.62,8.04M137.25,8.04L137.25,10.61M141.62,8.04L141.62,10.61M137.25,10.38L141.62,10.38" stroke="#3aa03a" stroke-width="0.80" fill="none" opacity="1" stroke-linecap="round"/>
<line x1="166.30" y1="0.00" x2="166.30" y2="14.50" stroke="#cfcfcf" stroke-width="0.8" />
<rect x="170.40" y="0.00" width="76.00" height="14.20" fill="#ffffff" stroke="#b8b8b8" stroke-width="0.8"/>
<rect x="234.90" y="0.60" width="11.00" height="13.00" fill="#efefef" stroke="#b0b0b0" stroke-width="0.7"/>
<path d="M237.8,6 L243.0,6 L240.4,9 Z" fill="#111"/>
<path d="M176.90,3.36L176.90,4.60M173.62,4.76L180.18,4.76M175.34,5.15L178.46,9.44M178.46,9.44L180.41,10.61M178.62,5.15L175.73,9.44M175.73,9.44L173.39,10.61M182.28,4.14L188.21,4.14M182.91,5.23L187.59,5.23M181.74,6.48L188.76,6.48M185.25,3.36L185.25,6.48M184.86,6.48L181.97,8.82M185.64,6.48L188.76,8.82M185.25,7.10L185.25,10.84M183.69,8.27L182.91,9.83M186.81,8.27L187.59,9.83M185.25,10.84L184.47,10.22" stroke="#3aa03a" stroke-width="0.80" fill="none" opacity="1" stroke-linecap="round"/>
<text x="189.60" y="10.80" font-size="9.2" fill="#3aa03a" >98</text>
<path d="M201.56,3.36L200.62,4.76M201.17,3.98L203.28,3.98M202.18,3.98L202.50,4.76M205.07,3.36L204.29,4.76M204.68,3.98L207.18,3.98M205.85,3.98L206.24,4.76M200.94,5.54L200.94,10.84M201.40,5.15L201.95,5.70M202.73,5.54L206.86,5.54M206.86,5.54L206.86,10.61M206.86,10.61L206.08,10.22M202.73,7.10L205.30,7.10M202.73,7.10L202.73,9.60M205.30,7.10L205.30,9.60M202.73,8.35L205.30,8.35M202.73,9.60L205.30,9.60M210.53,3.36L208.97,6.32M209.91,5.15L209.91,10.84M211.15,5.38L215.83,5.38M213.49,3.36L213.49,10.84M213.34,5.54L211.15,8.82M213.65,5.54L215.91,8.82M212.09,8.97L214.90,8.97" stroke="#3aa03a" stroke-width="0.80" fill="none" opacity="1" stroke-linecap="round"/>
<line x1="251.00" y1="0.00" x2="251.00" y2="14.50" stroke="#cfcfcf" stroke-width="0.8" />
<rect x="255.80" y="0.00" width="72.00" height="14.20" fill="#ffffff" stroke="#b8b8b8" stroke-width="0.8"/>
<path d="M262.30,3.36L262.30,4.60M259.02,4.76L265.58,4.76M260.74,5.15L263.86,9.44M263.86,9.44L265.81,10.61M264.02,5.15L261.13,9.44M261.13,9.44L258.79,10.61M267.68,4.14L273.61,4.14M268.31,5.23L272.99,5.23M267.14,6.48L274.16,6.48M270.65,3.36L270.65,6.48M270.26,6.48L267.37,8.82M271.04,6.48L274.16,8.82M270.65,7.10L270.65,10.84M269.09,8.27L268.31,9.83M272.21,8.27L272.99,9.83M270.65,10.84L269.87,10.22M280.16,3.59L277.43,5.70M277.04,3.59L277.04,9.83M277.04,9.83L278.60,8.82M275.48,6.71L282.50,6.71M278.60,6.71L282.27,10.61M287.34,3.20L287.34,4.14M284.06,4.37L290.61,4.37M284.06,4.37L284.06,5.54M290.61,4.37L290.61,5.54M284.22,7.10L290.46,7.10M287.34,5.70L287.34,10.84M287.03,7.26L284.06,10.22M287.65,7.26L290.61,10.22" stroke="#3aa03a" stroke-width="0.80" fill="none" opacity="1" stroke-linecap="round"/>
<rect x="321.30" y="0.00" width="5.00" height="13.40" fill="#f0f0f0" />
<rect x="321.30" y="13.40" width="5.00" height="1.60" fill="#8a8a8a" />
<path d="M324,5.8 L326.4,5.8 L325.2,7.8 Z" fill="#111"/>
<linearGradient id="rg" x1="0" y1="0" x2="0" y2="1"><stop offset="0" stop-color="#d2d2d2"/><stop offset="1" stop-color="#c4c4c4"/></linearGradient>
<rect x="0.00" y="16.40" width="326.20" height="13.20" fill="url(#rg)" />
<rect x="0.00" y="29.30" width="323.40" height="1.20" fill="#6e6e6e" />
<rect x="0.00" y="15.20" width="326.00" height="1.20" fill="#f4f4f4" />
<path d="M3.32,25.6V29M8.55,21.2V29M13.78,25.6V29M19.01,25.6V29M24.24,25.6V29M29.47,25.6V29M34.70,17.4V29M39.93,25.6V29M45.16,25.6V29M50.39,25.6V29M55.62,25.6V29M60.85,21.2V29M66.08,25.6V29M71.31,25.6V29M76.54,25.6V29M81.77,25.6V29M87.00,17.4V29M92.23,25.6V29M97.46,25.6V29M102.69,25.6V29M107.92,25.6V29M113.15,21.2V29M118.38,25.6V29M123.61,25.6V29M128.84,25.6V29M134.07,25.6V29M139.30,17.4V29M144.53,25.6V29M149.76,25.6V29M154.99,25.6V29M160.22,25.6V29M165.45,21.2V29M170.68,25.6V29M175.91,25.6V29M181.14,25.6V29M186.37,25.6V29M191.60,17.4V29M196.83,25.6V29M202.06,25.6V29M207.29,25.6V29M212.52,25.6V29M217.75,21.2V29M222.98,25.6V29M228.21,25.6V29M233.44,25.6V29M238.67,25.6V29M243.90,17.4V29M249.13,25.6V29M254.36,25.6V29M259.59,25.6V29M264.82,25.6V29M270.05,21.2V29M275.28,25.6V29M280.51,25.6V29M285.74,25.6V29M290.97,25.6V29M296.20,17.4V29M301.43,25.6V29M306.66,25.6V29M311.89,25.6V29M317.12,25.6V29" stroke="#2a2a2a" stroke-width="0.9" fill="none"/>
<text x="35.50" y="21.60" font-size="5.2" fill="#222" >50</text>
<text x="87.80" y="21.60" font-size="5.2" fill="#222" >40</text>
<text x="140.10" y="21.60" font-size="5.2" fill="#222" >30</text>
<text x="192.40" y="21.60" font-size="5.2" fill="#222" >20</text>
<text x="244.70" y="21.60" font-size="5.2" fill="#222" >10</text>
<text x="297.00" y="21.60" font-size="5.2" fill="#222" >0</text>
<path d="M57.6,17.2 V22 M56.4,20.6 L57.6,22.4 L58.8,20.6" stroke="#e03030" stroke-width="0.8" fill="none"/>
<rect x="322.30" y="21.00" width="1.30" height="7.60" fill="#555" />
<line x1="296.50" y1="52.00" x2="296.50" y2="367.00" stroke="#4a4a4a" stroke-width="0.9" />
<line x1="296.50" y1="52.00" x2="324.00" y2="52.00" stroke="#4a4a4a" stroke-width="0.9" />
<line x1="296.50" y1="366.80" x2="324.00" y2="366.80" stroke="#4a4a4a" stroke-width="0.9" />
<line x1="300.00" y1="369.00" x2="324.00" y2="369.00" stroke="#b4b4b4" stroke-width="1.2" />
<line x1="289.00" y1="52.00" x2="304.00" y2="52.00" stroke="#2a2ad0" stroke-width="1.1" />
<line x1="296.50" y1="45.00" x2="296.50" y2="55.50" stroke="#2a2ad0" stroke-width="1.1" />
<text x="291.00" y="60.60" font-size="6.8" fill="#23883a" >G</text>
<text x="301.20" y="60.60" font-size="6.8" fill="#23883a" >X</text>
<text x="296.40" y="66.60" font-size="6.8" fill="#23883a" >Y</text>
<g transform="translate(159.30,66.80)">
<path d="M17.6,39.4l2.7,3.5M23.9,45.0l3.1,1.4M21.8,44.4l3.0,1.6M15.0,38.8l2.4,1.0M18.7,41.9l3.8,2.1M5.4,28.5l4.3,1.8M25.2,45.9l1.5,2.4M18.2,40.9l4.1,2.5M21.5,43.3l2.5,1.8M3.6,28.4l3.1,2.2M10.5,32.9l3.6,2.6M14.7,35.0l1.4,1.7M19.9,41.0l1.1,1.7M14.8,39.0l2.0,0.8M8.6,30.2l2.9,3.8M9.9,34.2l3.1,3.0M21.3,41.3l1.1,1.8M10.2,34.3l3.2,3.5M14.1,36.4l2.4,1.7M5.7,28.6l3.2,3.8M23.6,46.1l2.3,2.2M19.8,43.7l2.5,2.1M3.2,27.8l3.3,3.0M22.5,45.1l2.9,3.2M6.4,30.7l1.6,2.4M21.4,43.8l1.6,3.0M38.2,37.6l3.1,-3.0M52.2,28.5l5.1,-1.5M30.5,44.5l4.3,-4.2M47.6,33.4l5.1,-2.3M36.3,40.9l3.4,-1.7M45.1,34.5l4.9,-4.6M27.9,46.2l3.0,-2.0M47.4,32.5l5.3,-2.9M46.9,34.6l3.8,-1.5M44.6,34.4l6.5,-1.8M31.3,44.2l6.3,-2.4M46.2,34.0l3.0,-1.4M44.8,35.2l4.2,-3.3M45.2,34.2l1.9,-2.6M31.3,42.5l4.7,-2.5M32.3,41.5l1.9,-2.5M31.7,43.4l2.7,-3.7M40.6,35.8l4.6,-4.7M35.2,41.2l2.4,-1.9M28.2,45.3l2.5,-1.5M41.6,37.2l5.9,-1.8M43.7,35.3l2.4,-2.0M51.0,30.8l5.0,-1.5M27.5,45.3l3.2,-3.9M42.9,34.5l4.0,-1.4M35.9,42.7l4.0,-1.2M42.2,35.7l4.9,-4.8M34.6,40.8l4.5,-1.3M29.6,45.2l3.9,-2.2M47.4,33.3l2.9,-4.0M45.9,34.2l2.6,-2.6M35.0,41.6l4.0,-2.4M45.4,33.4l3.8,-4.5M35.5,40.1l3.6,-3.3" stroke="#a0a0a0" stroke-width="0.55" fill="none"/>
<path d="M2.5,19.5 L0.6,16.6 L0,13.6 L0.4,9.6 L1.7,6 L4.4,3 L7.6,0.9 L10.6,0.2 L13.5,0 L16.2,1 L18.6,2.6 L21.2,5.4 L23.7,7.7 L26.2,8.8 L28.4,7.8 L30.5,6 L32.4,3.2 L34.7,0.9 L38,0.1 L41.5,0 L45,1.4 L48.2,3.4 L50.2,6.2 L51.6,9.4 L51.8,12.8 L51.3,16.1 L49.9,19.5" fill="none" stroke="#9088d4" stroke-width="0.9"/>
<path d="M2.5,19.5 L6.7,28.8 M49.9,19.5 L44,28.8" fill="none" stroke="#4a4f74" stroke-width="0.95"/>
<path d="M4.2,21.2 L11,15.2 L15.2,19 L21.2,12.4 L24.5,14.8 L27.1,13.6 L29.6,14.4 L34.4,9.9 L41.5,13.6 L49.9,17.2" fill="none" stroke="#444" stroke-width="0.8"/>
<path d="M6.7,28.8 L44,28.8" stroke="#4e5268" stroke-width="0.95"/>
<path d="M6.7,28.8 L11.4,33.4 L16.1,37.2 L20.4,40.6 L24.5,43.2 L27.1,43.7 L31,41 L34.7,37.8 L39.6,33.4 L44,28.8" fill="none" stroke="#7fe0e6" stroke-width="1"/>
<path d="M25.4,36.4 L26.6,39.6 L27.2,43.4 L25.4,46.6 L23.6,43.4 L24.2,39.6 Z" fill="#fff" stroke="#000" stroke-width="0.9"/><path d="M25.4,42 V46" stroke="#000" stroke-width="1"/>
</g>
<rect x="223.40" y="57.00" width="60.30" height="60.30" fill="#ffffff" stroke="#8c8c8c" stroke-width="0.9" rx="2"/>
<g transform="translate(227.90,66.80)">
<path d="M17.6,39.4l2.7,3.5M23.9,45.0l3.1,1.4M21.8,44.4l3.0,1.6M15.0,38.8l2.4,1.0M18.7,41.9l3.8,2.1M5.4,28.5l4.3,1.8M25.2,45.9l1.5,2.4M18.2,40.9l4.1,2.5M21.5,43.3l2.5,1.8M3.6,28.4l3.1,2.2M10.5,32.9l3.6,2.6M14.7,35.0l1.4,1.7M19.9,41.0l1.1,1.7M14.8,39.0l2.0,0.8M8.6,30.2l2.9,3.8M9.9,34.2l3.1,3.0M21.3,41.3l1.1,1.8M10.2,34.3l3.2,3.5M14.1,36.4l2.4,1.7M5.7,28.6l3.2,3.8M23.6,46.1l2.3,2.2M19.8,43.7l2.5,2.1M3.2,27.8l3.3,3.0M22.5,45.1l2.9,3.2M6.4,30.7l1.6,2.4M21.4,43.8l1.6,3.0M38.2,37.6l3.1,-3.0M52.2,28.5l5.1,-1.5M30.5,44.5l4.3,-4.2M47.6,33.4l5.1,-2.3M36.3,40.9l3.4,-1.7M45.1,34.5l4.9,-4.6M27.9,46.2l3.0,-2.0M47.4,32.5l5.3,-2.9M46.9,34.6l3.8,-1.5M44.6,34.4l6.5,-1.8M31.3,44.2l6.3,-2.4M46.2,34.0l3.0,-1.4M44.8,35.2l4.2,-3.3M45.2,34.2l1.9,-2.6M31.3,42.5l4.7,-2.5M32.3,41.5l1.9,-2.5M31.7,43.4l2.7,-3.7M40.6,35.8l4.6,-4.7M35.2,41.2l2.4,-1.9M28.2,45.3l2.5,-1.5M41.6,37.2l5.9,-1.8M43.7,35.3l2.4,-2.0M51.0,30.8l5.0,-1.5M27.5,45.3l3.2,-3.9M42.9,34.5l4.0,-1.4M35.9,42.7l4.0,-1.2M42.2,35.7l4.9,-4.8M34.6,40.8l4.5,-1.3M29.6,45.2l3.9,-2.2M47.4,33.3l2.9,-4.0M45.9,34.2l2.6,-2.6M35.0,41.6l4.0,-2.4M45.4,33.4l3.8,-4.5M35.5,40.1l3.6,-3.3" stroke="#b4b4b4" stroke-width="0.55" fill="none"/>
<path d="M2.5,19.5 L0.6,16.6 L0,13.6 L0.4,9.6 L1.7,6 L4.4,3 L7.6,0.9 L10.6,0.2 L13.5,0 L16.2,1 L18.6,2.6 L21.2,5.4 L23.7,7.7 L26.2,8.8 L28.4,7.8 L30.5,6 L32.4,3.2 L34.7,0.9 L38,0.1 L41.5,0 L45,1.4 L48.2,3.4 L50.2,6.2 L51.6,9.4 L51.8,12.8 L51.3,16.1 L49.9,19.5" fill="none" stroke="#3a8fd2" stroke-width="0.9"/>
<path d="M2.5,19.5 L6.7,28.8 M49.9,19.5 L44,28.8" fill="none" stroke="#3a8fd2" stroke-width="0.95"/>
<path d="M4.2,21.2 L11,15.2 L15.2,19 L21.2,12.4 L24.5,14.8 L27.1,13.6 L29.6,14.4 L34.4,9.9 L41.5,13.6 L49.9,17.2" fill="none" stroke="#8c8c8c" stroke-width="0.8"/>
<path d="M6.7,28.8 L44,28.8" stroke="#c0c0c0" stroke-width="0.95"/>
<path d="M6.7,28.8 L11.4,33.4 L16.1,37.2 L20.4,40.6 L24.5,43.2 L27.1,43.7 L31,41 L34.7,37.8 L39.6,33.4 L44,28.8" fill="none" stroke="#3a8fd2" stroke-width="1"/>
<path d="M25.4,36.4 L26.6,39.6 L27.2,43.4 L25.4,46.6 L23.6,43.4 L24.2,39.6 Z" fill="#fff" stroke="#000" stroke-width="0.9"/><path d="M25.4,42 V46" stroke="#000" stroke-width="1"/>
</g>
<use href="#ht" transform="translate(71.00,88.00) scale(1.0000,1.0000)" fill="none" stroke="#1a1a1a" stroke-width="0.85" />
<use href="#ms" transform="translate(74.00,123.00) scale(1.0000,1.0000)" />
<use href="#cs" transform="translate(71.80,139.90) scale(1.0000,1.0000)" />
<use href="#cs" transform="translate(25.00,154.80) scale(1.0000,1.0000)" />
<use href="#lb" transform="translate(33.80,183.30) scale(1.0000,1.0000)" />
<use href="#vr" transform="translate(97.60,203.40) scale(1.0000,1.0000)" />
<use href="#dr" transform="translate(94.40,175.00) scale(1.0000,1.0000)" />
<use href="#dr" transform="translate(123.00,190.80) scale(1.0000,1.0000)" />
<use href="#tr" transform="translate(67.93,198.60) scale(0.9000,0.9000)" />
<use href="#tr" transform="translate(95.73,204.60) scale(0.9000,0.9000)" />
<use href="#mo" transform="translate(74.40,207.50) scale(1.0000,1.0000)" fill="none" stroke="#1a1a1a" stroke-width="0.85" />
<use href="#ms" transform="translate(127.30,164.60) scale(0.9792,0.9793)" />
<use href="#lo" transform="translate(136.30,183.40) scale(1.0000,1.0000)" fill="none" stroke="#1a1a1a" stroke-width="0.85" />
<line x1="136.30" y1="183.90" x2="172.70" y2="183.90" stroke="#333" stroke-width="1.3" />
<use href="#mo" transform="translate(180.00,164.30) scale(0.9959,1.0051)" fill="none" stroke="#1a1a1a" stroke-width="0.85" />
<use href="#ht" transform="translate(240.20,154.60) scale(0.9868,1.0138)" fill="none" stroke="#1a1a1a" stroke-width="0.85" />
<use href="#lb" transform="translate(78.60,235.80) scale(0.9892,0.9857)" />
<use href="#lo" transform="translate(78.70,261.20) scale(1.0000,0.9714)" fill="none" stroke="#1a1a1a" stroke-width="0.86" />
<line x1="78.70" y1="261.69" x2="115.10" y2="261.69" stroke="#333" stroke-width="1.262857142857143" />
<use href="#mo" transform="translate(62.60,311.30) scale(1.0041,1.0051)" fill="none" stroke="#1a1a1a" stroke-width="0.85" />
<use href="#cs" transform="translate(117.00,301.80) scale(1.0112,0.9833)" />
<use href="#cs" transform="translate(172.20,265.70) scale(1.0022,1.0167)" />
<use href="#ms" transform="translate(175.00,283.60) scale(0.9750,0.9793)" />
<use href="#hf" transform="translate(172.20,301.60) scale(1.0000,1.0000)" fill="none" stroke="#1a1a1a" stroke-width="0.85" />
<use href="#tr" transform="translate(195.70,331.00) scale(1.0000,1.0000)" />
<use href="#dr" transform="translate(176.59,338.30) scale(0.9200,0.9200)" />
<use href="#dr" transform="translate(194.92,347.60) scale(0.9500,0.9500)" />
<use href="#tr" transform="translate(211.50,343.60) scale(1.0000,1.0000)" />
<use href="#lb" transform="translate(128.00,330.80) scale(1.0081,0.9571)" />
<use href="#mo" transform="translate(175.00,354.60) scale(0.9979,1.0102)" fill="none" stroke="#1a1a1a" stroke-width="0.85" style="stroke-width:1.25"/>
<line x1="179.00" y1="374.20" x2="216.00" y2="374.20" stroke="#222" stroke-width="1.6" />
<use href="#lb" transform="translate(179.00,376.60) scale(1.0270,0.9857)" />
<use href="#vr" transform="translate(201.50,421.50) scale(1.0000,1.0000)" />
<use href="#ms" transform="translate(247.20,311.40) scale(0.9792,0.9655)" />
<use href="#vr" transform="translate(255.60,349.40) scale(1.0000,1.0000)" />
<text x="81" y="401.6" font-size="19.5" font-weight="bold" fill="#fff" stroke="#9a9a9a" stroke-width="0.9" paint-order="stroke" textLength="119" lengthAdjust="spacingAndGlyphs">www.nipic.com</text>
<path d="M16.4,386.4L16.4,398.7M16.4,386.4L21.6,386.4M21.6,386.4L21.6,398.7M16.4,398.7L21.6,398.7M16.4,392.4L21.6,392.4M25.0,385.0L33.5,385.0M25.0,385.0L25.0,392.1M33.5,385.0L33.5,392.1M25.0,392.1L33.5,392.1M25.0,392.1L23.5,402.1M27.3,395.3L27.3,401.6M27.3,401.6L34.1,401.6M33.5,394.9L28.0,397.8" stroke="#9a9a9a" stroke-width="3.6" fill="none" stroke-linecap="square"/>
<path d="M16.4,386.4L16.4,398.7M16.4,386.4L21.6,386.4M21.6,386.4L21.6,398.7M16.4,398.7L21.6,398.7M16.4,392.4L21.6,392.4M25.0,385.0L33.5,385.0M25.0,385.0L25.0,392.1M33.5,385.0L33.5,392.1M25.0,392.1L33.5,392.1M25.0,392.1L23.5,402.1M27.3,395.3L27.3,401.6M27.3,401.6L34.1,401.6M33.5,394.9L28.0,397.8" stroke="#ffffff" stroke-width="2" fill="none" stroke-linecap="square"/>
<path d="M37.6,384.6L54.4,384.6M37.6,384.6L37.6,401.7M54.4,384.6L54.4,401.7M37.6,401.7L54.4,401.7M42.2,389.2L49.8,389.2M49.8,389.2L42.2,395.3M43.1,391.1L50.2,395.3M44.5,396.8L47.9,397.6M43.3,399.1L48.7,399.8" stroke="#9a9a9a" stroke-width="3.6" fill="none" stroke-linecap="square"/>
<path d="M37.6,384.6L54.4,384.6M37.6,384.6L37.6,401.7M54.4,384.6L54.4,401.7M37.6,401.7L54.4,401.7M42.2,389.2L49.8,389.2M49.8,389.2L42.2,395.3M43.1,391.1L50.2,395.3M44.5,396.8L47.9,397.6M43.3,399.1L48.7,399.8" stroke="#ffffff" stroke-width="2" fill="none" stroke-linecap="square"/>
<path d="M58.6,384.6L75.4,384.6M58.6,384.6L58.6,402.1M75.4,384.6L75.4,402.1M62.1,388.8L66.2,397.2M66.2,388.8L62.1,397.2M68.1,388.8L72.3,397.2M72.3,388.8L68.1,397.2M75.4,402.1L72.7,401.4" stroke="#9a9a9a" stroke-width="3.6" fill="none" stroke-linecap="square"/>
<path d="M58.6,384.6L75.4,384.6M58.6,384.6L58.6,402.1M75.4,384.6L75.4,402.1M62.1,388.8L66.2,397.2M66.2,388.8L62.1,397.2M68.1,388.8L72.3,397.2M72.3,388.8L68.1,397.2M75.4,402.1L72.7,401.4" stroke="#ffffff" stroke-width="2" fill="none" stroke-linecap="square"/>
<rect x="326.00" y="0.00" width="325.00" height="414.00" fill="#f3f3f3" />
<rect x="326.00" y="0.00" width="698.00" height="1.20" fill="#fafafa" />
<path d="M327,40 V45.6 H332.5 V40" fill="none" stroke="#333" stroke-width="0.9"/>
<rect x="339.00" y="43.40" width="1.20" height="1.20" fill="#222" />
<rect x="347.60" y="40.00" width="9.00" height="6.00" fill="#111" />
<rect x="351.00" y="40.00" width="1.20" height="3.00" fill="#f3f3f3" />
<path d="M362,40 V45.6 H371 V40 M362,42.4 H371" fill="none" stroke="#222" stroke-width="1"/>
<line x1="374.60" y1="40.00" x2="374.60" y2="47.00" stroke="#d0d0d0" stroke-width="0.8" />
<rect x="380.00" y="41.40" width="6.00" height="4.00" fill="#dadada" />
<rect x="392.00" y="41.40" width="8.00" height="4.00" fill="#dcdcdc" />
<path d="M407.6,40.6 H417 V45.8 H411 V43.6 H407.6 Z" fill="#1a1a1a"/>
<line x1="421.00" y1="40.00" x2="421.00" y2="47.00" stroke="#d0d0d0" stroke-width="0.8" />
<path d="M425.6,40 Q429.6,47.6 434,40" fill="none" stroke="#222" stroke-width="1.1"/>
<rect x="439.40" y="42.20" width="1.10" height="1.10" fill="#222" />
<path d="M448,40 Q452,47 456,40" fill="none" stroke="#cfcfcf" stroke-width="1.1"/>
<rect x="461.60" y="42.20" width="1.00" height="1.00" fill="#ccc" />
<line x1="469.40" y1="40.00" x2="469.40" y2="47.00" stroke="#d0d0d0" stroke-width="0.8" />
<path d="M474.4,40 A4.4,5.6 0 0 0 483.2,40 Z" fill="#111"/>
<path d="M477.6,40 A1.4,2 0 0 0 480.4,40Z" fill="#f3f3f3"/>
<line x1="487.00" y1="40.00" x2="487.00" y2="47.00" stroke="#d0d0d0" stroke-width="0.8" />
<path d="M491.6,40 V45.4 H500.6 V40" fill="none" stroke="#333" stroke-width="0.9"/><path d="M494.6,41 H497.8 L496.2,43.4Z" fill="#222"/>
<path d="M505.2,40 V45.4 H514.6 V40" fill="none" stroke="#333" stroke-width="0.9"/><path d="M508.4,43 H511.6 L510,40.6Z" fill="#222"/>
<rect x="519.60" y="40.40" width="4.60" height="5.20" fill="#333" />
<rect x="520.80" y="40.40" width="2.20" height="1.60" fill="#f3f3f3" />
<line x1="531.00" y1="40.00" x2="531.00" y2="47.00" stroke="#d0d0d0" stroke-width="0.8" />
<rect x="536.00" y="38.00" width="36.00" height="8.60" fill="#ffffff" stroke="#c4c4c4" stroke-width="0.8"/>
<rect x="572.00" y="38.00" width="9.40" height="8.60" fill="#f0f0f0" stroke="#c4c4c4" stroke-width="0.8"/>
<text x="539.00" y="42.60" font-size="6" fill="#555" >74%</text>
<path d="M575.4,41.4 H578.4 L576.9,43.2Z" fill="#222"/>
<path d="M586,41 H595 V45.4 H592.6 V43.6 H588.4 V45.4 H586 Z" fill="#1c1c1c"/>
<rect x="600.80" y="40.00" width="12.00" height="6.40" fill="#f3f3f3" stroke="#4a4a4a" stroke-width="0.9"/>
<rect x="602.60" y="42.40" width="8.40" height="2.60" fill="#f3f3f3" stroke="#333" stroke-width="0.8"/>
<rect x="617.00" y="41.20" width="9.00" height="4.40" fill="#6a6a6a" />
<path d="M639.6,40.6 l1.8,1.8 l-1.8,1.8 M642.5,40.6 l1.8,1.8 l-1.8,1.8" stroke="#cccccc" stroke-width="0.8" fill="none"/>
<rect x="326.00" y="1.20" width="325.00" height="40.00" fill="#f3f3f3" />
<line x1="326.00" y1="49.40" x2="649.00" y2="49.40" stroke="#e2e2e2" stroke-width="1" />
<rect x="326.00" y="53.80" width="68.60" height="12.80" fill="#e6e6e6" stroke="#cdcdcd" stroke-width="0.7"/>
<path d="M387.4,59.4 H391.8 L389.6,62 Z" fill="#111"/>
<path d="M398.2,56.8 V54.6 H403.6 V56.8 M397.6,57.2 H404.2 V60 H397.6Z" fill="none" stroke="#444" stroke-width="0.8"/>
<path d="M398.6,62 H397.6 V68 H398.6 M399.8,61.6 H404 V68.2 H399.8Z" fill="none" stroke="#444" stroke-width="0.8"/>
<rect x="405.40" y="53.80" width="38.30" height="7.00" fill="#ffffff" stroke="#d2d2d2" stroke-width="0.7"/>
<rect x="405.40" y="61.40" width="38.30" height="7.20" fill="#ffffff" stroke="#d2d2d2" stroke-width="0.7"/>
<text x="407.20" y="59.60" font-size="5.9" fill="#222" >210.0 mm</text>
<text x="407.20" y="67.40" font-size="5.9" fill="#222" >297.0 mm</text>
<rect x="443.70" y="53.80" width="13.00" height="14.80" fill="#f0f0f0" stroke="#d2d2d2" stroke-width="0.7"/>
<line x1="450.20" y1="53.80" x2="450.20" y2="68.60" stroke="#d8d8d8" stroke-width="0.6" />
<line x1="443.70" y1="61.20" x2="456.70" y2="61.20" stroke="#d8d8d8" stroke-width="0.6" />
<path d="M445.9,56.9 H448.1 L447,58.4Z" fill="#222"/>
<path d="M452.5,58.300000000000004 H454.70000000000005 L453.6,56.800000000000004Z" fill="#222"/>
<path d="M445.9,64.3 H448.1 L447,65.8Z" fill="#222"/>
<path d="M452.5,65.7 H454.70000000000005 L453.6,64.2Z" fill="#222"/>
<line x1="459.60" y1="52.00" x2="459.60" y2="69.00" stroke="#dcdcdc" stroke-width="0.8" />
<rect x="462.60" y="54.40" width="11.60" height="11.80" fill="#ffffff" stroke="#c8c8c8" stroke-width="0.8"/>
<rect x="466.00" y="56.20" width="4.60" height="8.40" fill="none" stroke="#444" stroke-width="0.9"/>
<rect x="478.00" y="59.00" width="8.80" height="5.60" fill="none" stroke="#444" stroke-width="0.9"/>
<line x1="491.40" y1="52.00" x2="491.40" y2="69.00" stroke="#dcdcdc" stroke-width="0.8" />
<rect x="494.40" y="54.40" width="11.80" height="11.80" fill="#ffffff" stroke="#c8c8c8" stroke-width="0.8"/>
<rect x="496.40" y="56.40" width="4.00" height="4.00" fill="#fff" stroke="#444" stroke-width="0.8"/>
<rect x="499.20" y="59.20" width="4.40" height="4.40" fill="#fff" stroke="#444" stroke-width="0.8"/>
<path d="M510.4,56 H512.6 V64.6 H510.4Z M514,61.8 H515.6 V64.6 H514Z M517,59.6 H518.8 V64.6 H517Z" fill="none" stroke="#444" stroke-width="0.8"/>
<line x1="523.00" y1="52.00" x2="523.00" y2="69.00" stroke="#dcdcdc" stroke-width="0.8" />
<path d="M528.89,57.13L529.52,57.95M531.41,57.13L530.78,57.95M528.26,58.26L532.04,58.26M528.26,58.26L528.26,60.78M532.04,58.26L532.04,60.78M528.26,59.52L532.04,59.52M528.26,60.78L532.04,60.78M527.32,61.91L532.99,61.91M530.15,58.26L530.15,63.17M535.44,57.13L534.18,59.52M534.94,58.58L534.94,63.17M537.77,57.13L537.77,58.26M536.20,58.58L539.66,58.58M536.83,59.52L537.33,62.04M539.03,59.52L538.40,62.04M536.07,62.80L539.85,62.80" stroke="#333" stroke-width="0.65" fill="none" opacity="1" stroke-linecap="round"/>
<rect x="540.40" y="59.40" width="0.90" height="0.90" fill="#333" />
<rect x="540.40" y="62.20" width="0.90" height="0.90" fill="#333" />
<rect x="542.50" y="54.40" width="49.60" height="12.00" fill="#e4e4e4" stroke="#c2c2c2" stroke-width="0.8"/>
<path d="M548.90,56.80L548.90,57.50M546.10,57.64L551.70,57.64M547.50,58.34L550.30,58.34M547.50,58.34L547.50,59.32M550.30,58.34L550.30,59.32M547.50,59.32L550.30,59.32M545.75,60.16L552.05,60.16M545.75,60.16L545.75,60.86M552.05,60.16L552.05,60.86M549.60,60.65L547.50,61.14M547.15,61.84L550.30,61.56M546.45,62.75L550.65,62.40M548.76,60.86L548.76,63.24M548.76,63.24L552.05,63.24M552.05,63.24L552.05,62.54M554.64,57.50L555.55,59.25M558.14,57.50L557.23,59.25M553.24,59.95L559.54,59.95M556.39,56.94L556.39,63.66M556.11,60.16L553.45,63.10M556.67,60.16L559.33,63.10" stroke="#222" stroke-width="0.70" fill="none" opacity="1" stroke-linecap="round"/>
<path d="M586.4,59.6 H590.6 L588.5,62.2 Z" fill="#111"/>
<line x1="595.40" y1="52.00" x2="595.40" y2="69.00" stroke="#dcdcdc" stroke-width="0.8" />
<circle cx="606" cy="60.5" r="4.4" fill="none" stroke="#c4c4c4" stroke-width="0.8"/><path d="M603.4,60.5 H608.6 M606,57.9 V63.1" stroke="#c4c4c4" stroke-width="0.9"/>
<path d="M639.4,58.1 l2.2,2.2 l-2.2,2.2 M642.7,58.1 l2.2,2.2 l-2.2,2.2" stroke="#c2c2c2" stroke-width="0.9" fill="none"/>
<path d="M330.4,75 L332.8,76.8 L330.4,78.6Z" fill="#111"/>
<path d="M338,80.4 L342.8,74 L344.2,75 L339.4,81.2Z" fill="#b4b4b4"/>
<path d="M351.4,74.2 L349,76.8 L351.4,79.4" stroke="#cfcfcf" stroke-width="0.9" fill="none"/>
<rect x="355.60" y="72.30" width="0.00" height="0.00" fill="none" />
<rect x="355.70" y="72.30" width="8.80" height="9.00" fill="#ffffff" stroke="#555" stroke-width="0.8"/>
<path d="M355.7,72.3 l8.8,9 M364.5,72.3 l-8.8,9" stroke="#333" stroke-width="0.8"/>
<rect x="364.90" y="72.30" width="9.03" height="8.80" fill="#2a1f1b" />
<rect x="373.83" y="72.30" width="9.03" height="8.80" fill="#484040" />
<rect x="382.76" y="72.30" width="9.03" height="8.80" fill="#5b5b5b" />
<rect x="391.69" y="72.30" width="9.03" height="8.80" fill="#6e6e6e" />
<rect x="400.62" y="72.30" width="9.03" height="8.80" fill="#7f7f7f" />
<rect x="409.55" y="72.30" width="9.03" height="8.80" fill="#929292" />
<rect x="418.48" y="72.30" width="9.03" height="8.80" fill="#a5a5a5" />
<rect x="427.41" y="72.30" width="9.03" height="8.80" fill="#c2c2c2" />
<rect x="436.34" y="72.30" width="9.03" height="8.80" fill="#dcdcdc" stroke="#cfcfcf" stroke-width="0.6"/>
<rect x="445.27" y="72.30" width="9.03" height="8.80" fill="#f0f0f0" stroke="#cfcfcf" stroke-width="0.6"/>
<rect x="454.20" y="72.30" width="9.03" height="8.80" fill="#ffffff" stroke="#cfcfcf" stroke-width="0.6"/>
<rect x="463.13" y="72.30" width="9.03" height="8.80" fill="#1b2a8a" />
<rect x="472.06" y="72.30" width="9.03" height="8.80" fill="#1c98dc" />
<rect x="480.99" y="72.30" width="9.03" height="8.80" fill="#0f9a48" />
<rect x="489.92" y="72.30" width="9.03" height="8.80" fill="#ffee1c" />
<rect x="498.85" y="72.30" width="9.03" height="8.80" fill="#e20d1c" />
<rect x="507.78" y="72.30" width="9.03" height="8.80" fill="#e20f7a" />
<rect x="516.71" y="72.30" width="9.03" height="8.80" fill="#b03c8a" />
<rect x="525.64" y="72.30" width="9.03" height="8.80" fill="#f08a18" />
<rect x="534.57" y="72.30" width="9.03" height="8.80" fill="#f4b2b0" />
<rect x="543.50" y="72.30" width="9.03" height="8.80" fill="#8a7068" />
<rect x="552.43" y="72.30" width="9.03" height="8.80" fill="#d2cee8" />
<rect x="561.36" y="72.30" width="9.03" height="8.80" fill="#a69dd0" />
<rect x="570.29" y="72.30" width="9.03" height="8.80" fill="#7292d0" />
<rect x="579.22" y="72.30" width="9.03" height="8.80" fill="#7a6ab8" />
<rect x="588.15" y="72.30" width="9.03" height="8.80" fill="#9282ba" />
<rect x="597.08" y="72.30" width="9.03" height="8.80" fill="#4e6098" />
<rect x="606.01" y="72.30" width="9.03" height="8.80" fill="#5a5478" />
<path d="M618.6,74 L621.6,76.8 L618.6,79.6" stroke="#777" stroke-width="0.9" fill="none"/>
<path d="M626.4,74.4 l2.0,2.0 l-2.0,2.0 M629.5,74.4 l2.0,2.0 l-2.0,2.0" stroke="#aaaaaa" stroke-width="0.9" fill="none"/>
<rect x="326.00" y="81.80" width="312.00" height="10.40" fill="#e7e7e7" />
<rect x="326.00" y="81.80" width="88.00" height="10.40" fill="#cde2f6" />
<path d="M327,83 L327,89.4 L328.6,88 L329.8,90.6 L330.8,90 L329.8,87.6 L331.6,87.4 Z" fill="#111"/>
<path d="M335.65,83.73L334.53,86.24M335.19,85.25L335.19,90.07M336.51,84.59L339.61,84.59M339.61,84.59L339.61,85.71M336.51,85.71L339.61,85.71M336.51,85.71L336.51,86.90M336.51,86.90L340.07,86.90M340.07,86.90L340.07,88.22M340.07,88.22L339.41,88.09M337.63,83.73L337.63,87.56M337.63,87.56L336.31,89.87M338.75,83.73L338.75,90.07M341.26,85.05L347.20,85.05M343.90,83.73L341.59,87.56M342.38,86.57L342.38,90.07M343.70,87.23L347.00,87.23M345.29,85.91L345.29,89.67M343.24,89.67L347.40,89.67M348.65,86.57L348.19,88.55M349.97,85.58L349.97,89.21M349.97,89.21L352.81,89.21M352.81,89.21L352.81,88.22M351.16,84.59L351.69,85.91M353.14,85.91L354.13,87.56M355.78,85.25L360.40,85.25M355.78,85.25L355.78,87.89M360.40,85.25L360.40,87.89M355.78,87.89L360.40,87.89M358.09,83.73L358.09,90.07" stroke="#2a2a2a" stroke-width="0.65" fill="none" opacity="1" stroke-linecap="round"/>
<path d="M366.24,83.93L364.13,86.57M367.56,83.93L369.87,86.57M365.25,86.90L368.75,86.90M368.75,86.90L368.35,89.67M368.35,89.67L367.56,89.41M366.57,86.90L364.92,89.87M373.17,83.73L371.52,85.58M373.17,84.39L375.15,84.39M375.15,84.39L374.16,85.58M371.85,85.71L376.14,85.71M371.85,85.71L371.85,89.54M376.14,85.71L376.14,87.43M371.85,87.43L376.14,87.43M373.96,85.71L373.96,87.43M371.85,89.54L376.80,89.54M376.80,89.54L376.80,88.55" stroke="#2a2a2a" stroke-width="0.65" fill="none" opacity="1" stroke-linecap="round"/>
<path d="M380.39,84.92L385.34,84.92M380.39,84.92L380.39,87.56M380.39,87.56L379.73,89.87M380.39,86.57L382.37,86.57M382.37,86.57L382.17,88.55M382.17,88.55L381.51,88.35M383.03,83.73L384.02,87.56M384.02,87.56L385.47,89.87M385.47,89.87L385.67,88.88M385.21,86.24L382.70,89.67M384.35,83.93L385.01,84.39M388.18,84.13L391.08,84.13M388.18,84.13L388.18,86.24M391.08,84.13L391.08,86.24M388.18,86.24L391.08,86.24M386.86,87.23L389.23,87.23M386.86,87.23L386.86,89.67M389.23,87.23L389.23,89.67M386.86,89.67L389.23,89.67M390.03,87.23L392.40,87.23M390.03,87.23L390.03,89.67M392.40,87.23L392.40,89.67M390.03,89.67L392.40,89.67" stroke="#2a2a2a" stroke-width="0.65" fill="none" opacity="1" stroke-linecap="round"/>
<text x="393.40" y="89.60" font-size="6.2" fill="#333" font-style="italic">.cdr*</text>
<path d="M416.4,87 H421.6 M419,84.4 V89.6" stroke="#bdbdbd" stroke-width="1"/>
<rect x="326.00" y="92.20" width="312.00" height="7.00" fill="#f2f5f8" />
<rect x="326.00" y="92.00" width="312.00" height="0.90" fill="#a9d0e6" />
<path d="M331.03,98.2V99.2M333.27,98.2V99.2M335.50,98.2V99.2M337.74,98.2V99.2M339.97,97.4V99.2M342.21,98.2V99.2M344.44,98.2V99.2M346.68,98.2V99.2M348.91,98.2V99.2M351.15,95.8V99.2M353.38,98.2V99.2M355.62,98.2V99.2M357.85,98.2V99.2M360.09,98.2V99.2M362.32,97.4V99.2M364.56,98.2V99.2M366.79,98.2V99.2M369.03,98.2V99.2M371.26,98.2V99.2M373.50,95.8V99.2M375.74,98.2V99.2M377.97,98.2V99.2M380.20,98.2V99.2M382.44,98.2V99.2M384.68,97.4V99.2M386.91,98.2V99.2M389.14,98.2V99.2M391.38,98.2V99.2M393.62,98.2V99.2M395.85,95.8V99.2M398.08,98.2V99.2M400.32,98.2V99.2M402.55,98.2V99.2M404.79,98.2V99.2M407.02,97.4V99.2M409.26,98.2V99.2M411.49,98.2V99.2M413.73,98.2V99.2M415.96,98.2V99.2M418.20,95.8V99.2M420.44,98.2V99.2M422.67,98.2V99.2M424.90,98.2V99.2M427.14,98.2V99.2M429.38,97.4V99.2M431.61,98.2V99.2M433.84,98.2V99.2M436.08,98.2V99.2M438.31,98.2V99.2M440.55,95.8V99.2M442.78,98.2V99.2M445.02,98.2V99.2M447.25,98.2V99.2M449.49,98.2V99.2M451.72,97.4V99.2M453.96,98.2V99.2M456.19,98.2V99.2M458.43,98.2V99.2M460.66,98.2V99.2M462.90,95.8V99.2M465.13,98.2V99.2M467.37,98.2V99.2M469.60,98.2V99.2M471.84,98.2V99.2M474.07,97.4V99.2M476.31,98.2V99.2M478.54,98.2V99.2M480.78,98.2V99.2M483.01,98.2V99.2M485.25,95.8V99.2M487.49,98.2V99.2M489.72,98.2V99.2M491.95,98.2V99.2M494.19,98.2V99.2M496.43,97.4V99.2M498.66,98.2V99.2M500.89,98.2V99.2M503.13,98.2V99.2M505.37,98.2V99.2M507.60,95.8V99.2M509.83,98.2V99.2M512.07,98.2V99.2M514.30,98.2V99.2M516.54,98.2V99.2M518.77,97.4V99.2M521.01,98.2V99.2M523.25,98.2V99.2M525.48,98.2V99.2M527.71,98.2V99.2M529.95,95.8V99.2M532.19,98.2V99.2M534.42,98.2V99.2M536.66,98.2V99.2M538.89,98.2V99.2M541.12,97.4V99.2M543.36,98.2V99.2M545.60,98.2V99.2M547.83,98.2V99.2M550.07,98.2V99.2M552.30,95.8V99.2M554.53,98.2V99.2M556.77,98.2V99.2M559.00,98.2V99.2M561.24,98.2V99.2M563.47,97.4V99.2M565.71,98.2V99.2M567.94,98.2V99.2M570.18,98.2V99.2M572.41,98.2V99.2M574.65,95.8V99.2M576.88,98.2V99.2M579.12,98.2V99.2M581.36,98.2V99.2M583.59,98.2V99.2M585.82,97.4V99.2M588.06,98.2V99.2M590.29,98.2V99.2M592.53,98.2V99.2M594.76,98.2V99.2M597.00,95.8V99.2M599.24,98.2V99.2M601.47,98.2V99.2M603.71,98.2V99.2M605.94,98.2V99.2M608.17,97.4V99.2M610.41,98.2V99.2M612.64,98.2V99.2M614.88,98.2V99.2M617.12,98.2V99.2M619.35,95.8V99.2M621.59,98.2V99.2M623.82,98.2V99.2M626.06,98.2V99.2M628.29,98.2V99.2M630.52,97.4V99.2M632.76,98.2V99.2M635.00,98.2V99.2" stroke="#8a9aa8" stroke-width="0.5" fill="none"/>
<text x="351.95" y="96.80" font-size="4.1" fill="#5a6a78" >500</text>
<text x="374.30" y="96.80" font-size="4.1" fill="#5a6a78" >400</text>
<text x="396.65" y="96.80" font-size="4.1" fill="#5a6a78" >300</text>
<text x="419.00" y="96.80" font-size="4.1" fill="#5a6a78" >200</text>
<text x="441.35" y="96.80" font-size="4.1" fill="#5a6a78" >100</text>
<text x="463.70" y="96.80" font-size="4.1" fill="#5a6a78" >0</text>
<text x="486.05" y="96.80" font-size="4.1" fill="#5a6a78" >100</text>
<text x="508.40" y="96.80" font-size="4.1" fill="#5a6a78" >200</text>
<text x="530.75" y="96.80" font-size="4.1" fill="#5a6a78" >300</text>
<text x="553.10" y="96.80" font-size="4.1" fill="#5a6a78" >400</text>
<text x="575.45" y="96.80" font-size="4.1" fill="#5a6a78" >500</text>
<text x="597.80" y="96.80" font-size="4.1" fill="#5a6a78" >600</text>
<path d="M629.40,93.40L629.40,93.80M627.80,93.88L631.00,93.88M628.60,94.28L630.20,94.28M628.60,94.28L628.60,94.84M630.20,94.28L630.20,94.84M628.60,94.84L630.20,94.84M627.60,95.32L631.20,95.32M627.60,95.32L627.60,95.72M631.20,95.32L631.20,95.72M629.80,95.60L628.60,95.88M628.40,96.28L630.20,96.12M628.00,96.80L630.40,96.60M629.32,95.72L629.32,97.08M629.32,97.08L631.20,97.08M631.20,97.08L631.20,96.68M632.80,93.80L633.32,94.80M634.80,93.80L634.28,94.80M632.00,95.20L635.60,95.20M633.80,93.48L633.80,97.32M633.64,95.32L632.12,97.00M633.96,95.32L635.48,97.00" stroke="#5a6a78" stroke-width="0.45" fill="none" opacity="1" stroke-linecap="round"/>
<line x1="611.20" y1="93.40" x2="611.20" y2="99.00" stroke="#444" stroke-width="0.8" stroke-dasharray="1.2,1"/>
<rect x="331.00" y="99.20" width="297.00" height="252.80" fill="#ffffff" />
<rect x="326.00" y="99.20" width="5.20" height="252.80" fill="#f2f5f8" />
<line x1="331.10" y1="99.20" x2="331.10" y2="352.00" stroke="#c9d6e0" stroke-width="0.6" />
<path d="M328.6,100.4H331M330,102.64H331M330,104.87H331M330,107.11H331M330,109.34H331M330,111.58H331M330,113.81H331M330,116.05H331M330,118.28H331M330,120.52H331M328.6,122.8H331M330,124.98H331M330,127.22H331M330,129.46H331M330,131.69H331M330,133.93H331M330,136.16H331M330,138.40H331M330,140.63H331M330,142.87H331M328.6,145.1H331M330,147.34H331M330,149.57H331M330,151.81H331M330,154.04H331M330,156.28H331M330,158.51H331M330,160.75H331M330,162.98H331M330,165.22H331M328.6,167.5H331M330,169.69H331M330,171.92H331M330,174.16H331M330,176.39H331M330,178.63H331M330,180.86H331M330,183.10H331M330,185.33H331M330,187.57H331M328.6,189.8H331M330,192.04H331M330,194.27H331M330,196.51H331M330,198.74H331M330,200.98H331M330,203.21H331M330,205.45H331M330,207.68H331M330,209.92H331M328.6,212.2H331M330,214.39H331M330,216.62H331M330,218.86H331M330,221.09H331M330,223.33H331M330,225.56H331M330,227.80H331M330,230.03H331M330,232.27H331M328.6,234.5H331M330,236.74H331M330,238.97H331M330,241.21H331M330,243.44H331M330,245.68H331M330,247.91H331M330,250.15H331M330,252.38H331M330,254.62H331M328.6,256.9H331M330,259.09H331M330,261.32H331M330,263.56H331M330,265.79H331M330,268.03H331M330,270.26H331M330,272.50H331M330,274.73H331M330,276.97H331M328.6,279.2H331M330,281.44H331M330,283.67H331M330,285.91H331M330,288.14H331M330,290.38H331M330,292.61H331M330,294.85H331M330,297.08H331M330,299.32H331M328.6,301.6H331M330,303.79H331M330,306.02H331M330,308.25H331M330,310.49H331M330,312.73H331M330,314.96H331M330,317.19H331M330,319.43H331M330,321.67H331M328.6,323.9H331M330,326.13H331M330,328.37H331M330,330.60H331M330,332.84H331M330,335.07H331M330,337.31H331M330,339.54H331M330,341.78H331M330,344.01H331M328.6,346.2H331M330,348.49H331M330,350.72H331" stroke="#8a9aa8" stroke-width="0.5" fill="none"/>
<path d="M327.2,94 L329.6,96.4 M327.4,96.8 l1,-0.4" stroke="#666" stroke-width="0.6"/>
<rect x="627.80" y="99.20" width="9.40" height="252.80" fill="#f0f0f0" />
<rect x="628.60" y="106.60" width="7.80" height="226.00" fill="#d9d9d9" />
<path d="M630.6,104 L632.4,102.2 L634.2,104" stroke="#333" stroke-width="0.8" fill="none"/>
<rect x="629.00" y="334.00" width="7.00" height="4.40" fill="#cfcfcf" />
<path d="M630.6,343 L632.4,344.8 L634.2,343" stroke="#333" stroke-width="0.8" fill="none"/>
<rect x="326.00" y="352.00" width="312.00" height="9.20" fill="#f3f3f3" />
<line x1="331.00" y1="352.20" x2="628.00" y2="352.20" stroke="#dedede" stroke-width="0.7" />
<rect x="332.40" y="353.80" width="4.40" height="5.60" fill="none" stroke="#666" stroke-width="0.7"/>
<rect x="333.80" y="356.00" width="1.60" height="2.20" fill="none" stroke="#666" stroke-width="0.5"/>
<path d="M341.6,354.4 V359 M346,354.4 L342.6,356.7 L346,359Z M353.4,354.4 L350,356.7 L353.4,359Z" fill="#8c8c8c" stroke="#8c8c8c" stroke-width="0.7"/>
<text x="356.60" y="359.40" font-size="6" fill="#444" >1</text>
<path d="M364.20,353.73L363.56,354.88M363.24,355.01L365.29,355.01M363.24,355.01L363.24,359.36M365.29,355.01L365.29,359.36M363.24,357.12L365.29,357.12M363.24,359.36L365.29,359.36M366.76,353.73L365.93,355.52M366.44,354.88L368.49,354.88M368.49,354.88L368.23,359.36M368.23,359.36L367.40,359.04M366.95,356.48L367.40,357.44" stroke="#333" stroke-width="0.65" fill="none" opacity="1" stroke-linecap="round"/>
<text x="374.60" y="359.40" font-size="6" fill="#444" >1</text>
<path d="M381,354.4 L384.4,356.7 L381,359Z M388.6,354.4 L392,356.7 L388.6,359Z M393,354.4V359" fill="#8c8c8c" stroke="#8c8c8c" stroke-width="0.7"/>
<rect x="396.40" y="353.80" width="4.40" height="5.60" fill="none" stroke="#666" stroke-width="0.7"/>
<rect x="397.80" y="356.00" width="1.60" height="2.20" fill="none" stroke="#666" stroke-width="0.5"/>
<path d="M403.6,352.4 H406.6 L409.6,360.6 H427.6 L430.6,352.4" fill="#ffffff" stroke="#9a9a9a" stroke-width="0.7"/>
<path d="M412.72,354.11L418.48,354.11M415.60,354.11L414.96,355.20M413.68,355.39L417.52,355.39M413.68,355.39L413.68,358.21M417.52,355.39L417.52,358.21M413.68,358.21L417.52,358.21M415.60,355.84L415.60,357.57M415.09,358.40L413.04,359.87M416.24,358.59L418.29,359.87" stroke="#222" stroke-width="0.65" fill="none" opacity="1" stroke-linecap="round"/>
<text x="420.20" y="359.60" font-size="6" fill="#333" >1</text>
<path d="M430.6,352.6 H484.6 V360.4 H433" fill="#fafafa" stroke="#cfcfcf" stroke-width="0.6"/>
<rect x="485.00" y="352.60" width="143.00" height="8.40" fill="#ffffff" />
<path d="M489.4,354.8 L487.4,356.7 L489.4,358.6" stroke="#222" stroke-width="0.9" fill="none"/>
<rect x="501.80" y="352.80" width="108.40" height="8.00" fill="#cbcbcb" />
<path d="M622.4,354.8 L624.4,356.7 L622.4,358.6" stroke="#222" stroke-width="0.9" fill="none"/>
<circle cx="631.8" cy="356" r="2.1" fill="none" stroke="#555" stroke-width="0.8"/><path d="M633.4,357.6 L635.4,359.8" stroke="#555" stroke-width="0.9"/>
<path d="M330.4,364.6 L332.8,366.4 L330.4,368.2Z" fill="#111"/>
<path d="M337.8,370 L343.4,363.4 L344.8,364.6 L339.4,370.8Z" fill="#3a2a22"/>
<path d="M351.6,363.8 L349.2,366.4 L351.6,369" stroke="#cfcfcf" stroke-width="0.9" fill="none"/>
<rect x="355.40" y="361.80" width="9.05" height="9.00" fill="#ffffff" stroke="#555" stroke-width="0.8"/>
<path d="M355.4,361.8 l9.05,9 M364.45,361.8 l-9.05,9" stroke="#333" stroke-width="0.8"/>
<rect x="364.45" y="361.80" width="9.15" height="9.00" fill="#ffffff" stroke="#c4c4c4" stroke-width="0.5"/>
<rect x="373.50" y="361.80" width="9.15" height="9.00" fill="#cbdaf0" stroke="#c4c4c4" stroke-width="0.5"/>
<rect x="382.55" y="361.80" width="9.15" height="9.00" fill="#e0e8f6" stroke="#c4c4c4" stroke-width="0.5"/>
<rect x="391.60" y="361.80" width="9.15" height="9.00" fill="#8eaadd" stroke="#c4c4c4" stroke-width="0.5"/>
<rect x="400.65" y="361.80" width="9.15" height="9.00" fill="#e6ebf5" stroke="#c4c4c4" stroke-width="0.5"/>
<rect x="409.70" y="361.80" width="9.15" height="9.00" fill="#b9b9b9" stroke="#c4c4c4" stroke-width="0.5"/>
<rect x="418.75" y="361.80" width="9.15" height="9.00" fill="#575757" stroke="#c4c4c4" stroke-width="0.5"/>
<rect x="427.80" y="361.80" width="9.15" height="9.00" fill="#5a5959" stroke="#c4c4c4" stroke-width="0.5"/>
<rect x="436.85" y="361.80" width="9.15" height="9.00" fill="#3e221d" stroke="#c4c4c4" stroke-width="0.5"/>
<rect x="445.90" y="361.80" width="9.15" height="9.00" fill="#b8d4ce" stroke="#c4c4c4" stroke-width="0.5"/>
<rect x="454.95" y="361.80" width="9.15" height="9.00" fill="#4f9a96" stroke="#c4c4c4" stroke-width="0.5"/>
<rect x="464.00" y="361.80" width="9.15" height="9.00" fill="#b6d5c4" stroke="#c4c4c4" stroke-width="0.5"/>
<path d="M618.6,364 L621.4,366.4 L618.6,368.8" stroke="#c8c8c8" stroke-width="0.9" fill="none"/>
<path d="M626.4,364.4 l2.0,2.0 l-2.0,2.0 M629.5,364.4 l2.0,2.0 l-2.0,2.0" stroke="#cccccc" stroke-width="0.9" fill="none"/>
<line x1="326.00" y1="371.30" x2="649.00" y2="371.30" stroke="#e0e0e0" stroke-width="0.8" />
<rect x="326.00" y="371.80" width="323.00" height="16.00" fill="#f5f5f5" />
<text x="327.60" y="382.80" font-size="5.6" fill="#444" >91, -444.562 )</text>
<path d="M371.8,378.6 L374.4,380.6 L371.8,382.6Z" fill="#111"/>
<rect x="409.40" y="376.60" width="8.60" height="8.00" fill="#5a86c6" />
<rect x="409.40" y="376.60" width="8.60" height="2.40" fill="#c84a5a" />
<rect x="410.40" y="380.60" width="6.60" height="2.00" fill="#9cc0e8" />
<rect x="411.40" y="384.60" width="4.60" height="0.90" fill="#444" />
<path d="M426,381 L430,377 L434,381 L430,385Z" fill="#fff" stroke="#333" stroke-width="0.9"/><path d="M431,382 a2,2 0 1 0 2.6,1.8" stroke="#d03030" stroke-width="0.9" fill="none"/>
<rect x="436.40" y="375.40" width="10.40" height="10.40" fill="#ffffff" stroke="#cfcfcf" stroke-width="0.5"/>
<path d="M436.8,375.8 L446.4,385.4 M446.4,375.8 L436.8,385.4" stroke="#222" stroke-width="0.9"/>
<path d="M449.62,378.02L454.38,378.02M448.94,380.06L455.06,380.06M451.86,378.02L451.46,381.28M451.46,381.28L449.14,383.66M452.54,380.06L452.54,383.32M452.54,383.32L455.06,383.32M455.06,383.32L455.06,382.30" stroke="#333" stroke-width="0.70" fill="none" opacity="1" stroke-linecap="round"/>
<line x1="532.60" y1="374.00" x2="532.60" y2="386.00" stroke="#e0e0e0" stroke-width="0.8" />
<path d="M541.4,376.4 L542.8,379.8 L542.4,383 H540.4 L540,379.8Z M540.2,383.4 H542.6 V384.6 H540.2Z" fill="none" stroke="#444" stroke-width="0.7"/>
<rect x="546.20" y="375.20" width="10.40" height="10.40" fill="#2a1f1c" />
<text x="559.40" y="382.60" font-size="5.5" fill="#333" textLength="78" lengthAdjust="spacingAndGlyphs">C: 0 M: 0 Y: 0 K: 100  0.200 mm</text>
<rect x="638.00" y="70.00" width="12.60" height="301.40" fill="#ebebeb" />
<rect x="638.60" y="81.80" width="11.60" height="41.00" fill="#b5b5b5" />
<path d="M641.4,74.2 L646,79 M646,74.2 L641.4,79" stroke="#666" stroke-width="0.9"/>
<path d="M640.6,84 L640.6,89.4 L642,88.2 L643,90.4 L643.8,90 L642.8,87.8 L644.4,87.6 Z" fill="#111"/>
<text x="645.00" y="88.00" font-size="4.6" fill="#222" >?</text>
<path d="M646.05,92.95L646.05,95.05M647.66,94.00L641.50,94.00M641.50,94.00L641.85,93.30M643.60,92.95L644.44,95.05M647.24,95.96L647.24,98.76M647.24,95.96L645.14,95.96M647.24,98.76L645.14,98.76M646.19,95.96L646.19,98.76M645.14,95.96L645.14,98.76M644.30,95.40L644.30,99.32M644.30,97.36L641.36,97.36M642.90,97.36L642.90,98.90M643.60,96.45L641.15,95.40M642.20,96.10L641.15,99.32M647.10,101.35L647.10,105.55M645.14,100.30L645.14,106.60M645.14,103.45L641.15,103.45M641.15,103.45L641.50,102.75M643.95,101.91L641.85,100.79M643.95,104.99L641.85,106.11" stroke="#2a2a2a" stroke-width="0.60" fill="none" opacity="1" stroke-linecap="round"/>
<text x="0.00" y="0.00" font-size="5.6" fill="#222" transform="translate(641.6,109.4) rotate(90)">(N)</text>
<rect x="638.60" y="126.60" width="11.60" height="47.40" fill="#e2e2e2" />
<rect x="641.00" y="128.60" width="1.60" height="1.60" fill="#c03030" />
<rect x="643.40" y="130.00" width="3.00" height="1.20" fill="#444" />
<rect x="641.40" y="131.60" width="4.00" height="1.00" fill="#444" />
<path d="M646.75,135.95L646.75,138.54M646.75,138.54L641.85,136.30M645.35,136.44L642.20,138.54M645.70,139.10L645.70,142.46M647.66,141.06L641.36,141.06M641.36,141.06L641.85,140.15M644.30,139.66L643.25,140.22M647.66,145.75L646.40,144.35M647.24,145.75L647.24,147.85M647.24,147.85L646.40,147.15M646.26,144.35L646.26,148.55M646.26,144.35L645.00,144.35M646.26,148.55L645.00,148.55M645.00,144.35L645.00,148.55M646.26,146.45L645.00,146.45M645.00,146.45L643.60,144.00M644.30,146.10L641.15,146.80M641.15,146.80L641.50,146.10M643.60,146.10L642.20,143.79M642.76,146.31L641.15,144.00M644.44,148.90L643.46,147.15M643.46,147.15L641.15,149.39M647.38,151.35L647.38,156.46M647.38,156.46L646.12,156.46M646.12,151.35L646.12,156.46M647.38,151.35L644.30,151.35M644.30,151.35L641.15,150.65M645.42,152.75L645.70,155.90M644.72,152.40L644.72,156.25M644.72,152.40L643.46,152.40M644.72,156.25L643.46,156.25M643.46,152.40L643.46,156.25M645.42,154.29L641.15,154.29M642.76,152.05L642.76,156.74M642.76,152.05L641.15,152.05M642.76,156.74L641.15,156.74M642.06,153.24L642.06,155.34M647.66,158.91L640.94,158.91M645.70,158.07L644.30,157.79M646.05,159.75L644.86,160.17M647.10,161.50L645.00,160.59M645.70,161.01L645.70,164.30M647.66,162.55L641.36,162.55M643.60,161.15L643.60,163.95M641.36,160.45L641.36,164.51" stroke="#444" stroke-width="0.55" fill="none" opacity="1" stroke-linecap="round"/>
<rect x="638.60" y="176.60" width="11.60" height="55.40" fill="#e2e2e2" />
<rect x="641.00" y="178.60" width="1.60" height="1.60" fill="#555" />
<rect x="643.40" y="180.00" width="3.00" height="1.20" fill="#444" />
<rect x="641.40" y="181.60" width="4.00" height="1.00" fill="#444" />
<path d="M646.75,185.95L646.75,188.54M646.75,188.54L641.85,186.30M645.35,186.44L642.20,188.54M645.70,189.10L645.70,192.46M647.66,191.06L641.36,191.06M641.36,191.06L641.85,190.15M644.30,189.66L643.25,190.22M647.66,195.75L646.40,194.35M647.24,195.75L647.24,197.85M647.24,197.85L646.40,197.15M646.26,194.35L646.26,198.55M646.26,194.35L645.00,194.35M646.26,198.55L645.00,198.55M645.00,194.35L645.00,198.55M646.26,196.45L645.00,196.45M645.00,196.45L643.60,194.00M644.30,196.10L641.15,196.80M641.15,196.80L641.50,196.10M643.60,196.10L642.20,193.79M642.76,196.31L641.15,194.00M644.44,198.90L643.46,197.15M643.46,197.15L641.15,199.39M647.66,201.70L646.40,200.86M647.10,201.35L647.10,203.24M647.66,204.85L646.40,204.15M647.10,204.50L647.10,206.74M646.26,203.80L645.70,203.80M645.56,201.00L645.56,206.60M645.56,201.00L644.72,201.00M645.56,206.60L644.72,206.60M644.58,202.26L640.94,202.26M644.58,202.26L644.58,205.34M644.58,205.34L643.18,205.34M643.18,202.26L643.18,205.34M642.48,202.26L642.48,205.76M642.48,205.76L640.94,205.76M641.08,202.26L641.08,205.76M646.96,207.93L646.96,210.31M644.65,208.07L644.65,210.17M641.85,207.79L642.55,210.45M646.96,209.12L642.20,209.12M647.24,211.01L647.24,214.09M647.24,211.01L644.30,211.01M647.24,214.09L644.30,214.09M645.77,211.01L645.77,214.09M644.30,211.01L644.30,214.09M647.24,212.55L641.36,212.55M642.90,211.15L642.90,213.95M641.36,210.59L641.36,214.51M647.45,215.70L647.45,217.94M647.45,215.70L645.84,215.70M647.45,217.94L645.84,217.94M645.84,215.70L645.84,217.94M647.45,219.06L647.45,221.30M647.45,219.06L645.84,219.06M647.45,221.30L645.84,221.30M645.84,219.06L645.84,221.30M644.65,215.28L644.65,221.72M645.56,218.50L643.46,216.40M644.65,218.50L643.46,220.60M642.90,215.70L642.90,217.94M642.90,215.70L641.15,215.70M642.90,217.94L641.15,217.94M641.15,215.70L641.15,217.94M642.90,219.06L642.90,221.30M642.90,219.06L641.15,219.06M642.90,221.30L641.15,221.30M641.15,219.06L641.15,221.30" stroke="#444" stroke-width="0.55" fill="none" opacity="1" stroke-linecap="round"/>
<rect x="638.60" y="234.60" width="11.60" height="53.40" fill="#e2e2e2" />
<rect x="641.00" y="236.60" width="1.60" height="1.60" fill="#c03030" />
<rect x="643.40" y="238.00" width="3.00" height="1.20" fill="#444" />
<rect x="641.40" y="239.60" width="4.00" height="1.00" fill="#444" />
<path d="M647.66,247.10L644.65,247.10M646.40,247.10L646.40,249.34M646.75,245.35L644.65,245.35M644.65,243.95L644.65,250.25M644.30,247.10L642.55,247.10M643.74,245.56L642.34,244.65M643.95,249.06L641.85,246.75M641.85,246.75L640.94,244.30M647.45,255.50L645.56,253.05M647.45,252.70L641.85,252.70M641.85,252.70L642.76,254.10M644.65,251.30L644.65,257.60M644.65,254.10L641.15,257.39M647.45,261.10L646.75,259.14M645.56,258.58L645.56,261.66M646.96,260.12L640.94,260.12M645.35,259.98L642.90,258.58M645.35,260.26L643.60,261.66M645.70,262.36L645.70,264.88M645.70,262.36L642.20,262.36M645.70,264.88L642.20,264.88M642.20,262.36L642.20,264.88M647.66,270.55L647.10,267.40M646.40,266.00L646.40,272.30M645.56,267.19L645.56,271.11M645.56,267.19L643.46,267.19M645.56,271.11L643.46,271.11M644.51,267.19L644.51,271.11M643.46,267.19L643.46,271.11M647.24,269.15L641.15,269.15M642.34,266.91L642.34,271.39M641.15,266.00L641.15,272.30M647.66,275.45L646.26,274.05M647.10,275.10L647.10,279.44M646.05,274.96L646.05,278.46M646.05,274.96L643.95,274.96M646.05,278.46L643.95,278.46M645.00,274.96L645.00,278.46M643.95,274.96L643.95,278.46M643.74,276.15L641.85,274.05M643.04,275.80L643.04,278.60M643.04,278.60L640.94,273.70M642.55,275.80L640.94,279.65" stroke="#444" stroke-width="0.55" fill="none" opacity="1" stroke-linecap="round"/>
<rect x="638.60" y="290.60" width="11.60" height="49.40" fill="#e2e2e2" />
<rect x="641.00" y="292.60" width="1.60" height="1.60" fill="#5080c0" />
<rect x="643.40" y="294.00" width="3.00" height="1.20" fill="#444" />
<rect x="641.40" y="295.60" width="4.00" height="1.00" fill="#444" />
<path d="M646.75,299.95L646.75,302.54M646.75,302.54L641.85,300.30M645.35,300.44L642.20,302.54M645.70,303.10L645.70,306.46M647.66,305.06L641.36,305.06M641.36,305.06L641.85,304.15M644.30,303.66L643.25,304.22M647.80,310.45L646.96,310.45M646.75,307.51L646.75,313.39M646.54,309.05L644.30,311.99M646.54,311.99L644.16,308.70M644.16,308.70L643.60,307.30M644.30,311.99L643.74,313.60M643.95,309.40L642.20,309.40M642.20,309.40L640.94,308.35M643.95,311.71L640.94,311.71M647.45,316.40L645.00,316.05M646.54,316.40L646.54,320.60M645.00,316.05L645.00,320.25M645.00,320.25L641.50,319.90M641.50,319.90L641.85,318.85M643.46,314.65L643.46,319.20M647.45,324.45L644.65,322.21M647.45,325.85L644.65,328.30M644.30,323.40L644.30,327.11M644.30,327.11L641.36,326.69M641.36,326.69L641.64,325.85M644.30,324.80L641.15,323.05" stroke="#444" stroke-width="0.55" fill="none" opacity="1" stroke-linecap="round"/>
<text x="0.00" y="0.00" font-size="6" fill="#333" transform="translate(641.8,332) rotate(90)">...</text>
<circle cx="644.2" cy="354.2" r="3.8" fill="none" stroke="#bdbdbd" stroke-width="0.8"/><path d="M642,354.2 H646.4 M644.2,352 V356.4" stroke="#bdbdbd" stroke-width="0.9"/>
<rect x="649.40" y="371.40" width="2.00" height="16.00" fill="#ffffff" />
<rect x="433.45" y="145.65" width="4.43" height="3.26" fill="#fdfdfa" stroke="#84847a" stroke-width="0.9"/>
<rect x="439.18" y="145.65" width="4.43" height="3.26" fill="#fdfdfa" stroke="#84847a" stroke-width="0.9"/>
<rect x="444.92" y="145.65" width="4.43" height="3.26" fill="#fbfbf6" stroke="#84847a" stroke-width="0.9"/>
<rect x="433.45" y="150.21" width="4.43" height="3.26" fill="#fdfdfa" stroke="#84847a" stroke-width="0.9"/>
<rect x="439.18" y="150.21" width="4.43" height="3.26" fill="#fbfbf6" stroke="#84847a" stroke-width="0.9"/>
<rect x="444.92" y="150.21" width="4.43" height="3.26" fill="#f8f8f2" stroke="#84847a" stroke-width="0.9"/>
<rect x="433.45" y="154.77" width="4.43" height="3.26" fill="#fbfaf2" stroke="#84847a" stroke-width="0.9"/>
<rect x="439.18" y="154.77" width="4.43" height="3.26" fill="#f8f8f2" stroke="#84847a" stroke-width="0.9"/>
<rect x="444.92" y="154.77" width="4.43" height="3.26" fill="#f4f4ec" stroke="#84847a" stroke-width="0.9"/>
<rect x="433.45" y="159.33" width="4.43" height="3.26" fill="#f0e8c0" stroke="#84847a" stroke-width="0.9"/>
<rect x="439.18" y="159.33" width="4.43" height="3.26" fill="#9aae98" stroke="#84847a" stroke-width="0.9"/>
<rect x="444.92" y="159.33" width="4.43" height="3.26" fill="#8a9c8c" stroke="#84847a" stroke-width="0.9"/>
<rect x="433.45" y="163.89" width="4.43" height="3.26" fill="#e8c858" stroke="#84847a" stroke-width="0.9"/>
<rect x="439.18" y="163.89" width="4.43" height="3.26" fill="#5e8c7c" stroke="#84847a" stroke-width="0.9"/>
<rect x="444.92" y="163.89" width="4.43" height="3.26" fill="#4e8a80" stroke="#84847a" stroke-width="0.9"/>
<rect x="452.85" y="145.65" width="4.43" height="3.26" fill="#fdfdfa" stroke="#84847a" stroke-width="0.9"/>
<rect x="458.58" y="145.65" width="4.43" height="3.26" fill="#f8f6ea" stroke="#84847a" stroke-width="0.9"/>
<rect x="464.32" y="145.65" width="4.43" height="3.26" fill="#c8c0a8" stroke="#84847a" stroke-width="0.9"/>
<rect x="452.85" y="150.21" width="4.43" height="3.26" fill="#fdfdfa" stroke="#84847a" stroke-width="0.9"/>
<rect x="458.58" y="150.21" width="4.43" height="3.26" fill="#f4ecd8" stroke="#84847a" stroke-width="0.9"/>
<rect x="464.32" y="150.21" width="4.43" height="3.26" fill="#c4baa0" stroke="#84847a" stroke-width="0.9"/>
<rect x="452.85" y="154.77" width="4.43" height="3.26" fill="#fbf8f2" stroke="#84847a" stroke-width="0.9"/>
<rect x="458.58" y="154.77" width="4.43" height="3.26" fill="#e8c8b8" stroke="#84847a" stroke-width="0.9"/>
<rect x="464.32" y="154.77" width="4.43" height="3.26" fill="#b8b098" stroke="#84847a" stroke-width="0.9"/>
<rect x="452.85" y="159.33" width="4.43" height="3.26" fill="#d8b8b0" stroke="#84847a" stroke-width="0.9"/>
<rect x="458.58" y="159.33" width="4.43" height="3.26" fill="#e0a888" stroke="#84847a" stroke-width="0.9"/>
<rect x="464.32" y="159.33" width="4.43" height="3.26" fill="#a8a080" stroke="#84847a" stroke-width="0.9"/>
<rect x="452.85" y="163.89" width="4.43" height="3.26" fill="#a87868" stroke="#84847a" stroke-width="0.9"/>
<rect x="458.58" y="163.89" width="4.43" height="3.26" fill="#b88878" stroke="#84847a" stroke-width="0.9"/>
<rect x="464.32" y="163.89" width="4.43" height="3.26" fill="#503830" stroke="#84847a" stroke-width="0.9"/>
<rect x="472.05" y="145.65" width="4.30" height="3.25" fill="#f6f6f0" stroke="#84847a" stroke-width="0.9"/>
<rect x="477.65" y="145.65" width="4.30" height="3.25" fill="#7a8c80" stroke="#84847a" stroke-width="0.9"/>
<rect x="483.25" y="145.65" width="4.30" height="3.25" fill="#8a9470" stroke="#84847a" stroke-width="0.9"/>
<rect x="488.85" y="145.65" width="4.30" height="3.25" fill="#5c7078" stroke="#84847a" stroke-width="0.9"/>
<rect x="472.05" y="150.20" width="4.30" height="3.25" fill="#a8b090" stroke="#84847a" stroke-width="0.9"/>
<rect x="477.65" y="150.20" width="4.30" height="3.25" fill="#6a8470" stroke="#84847a" stroke-width="0.9"/>
<rect x="483.25" y="150.20" width="4.30" height="3.25" fill="#4a6c70" stroke="#84847a" stroke-width="0.9"/>
<rect x="488.85" y="150.20" width="4.30" height="3.25" fill="#3c4858" stroke="#84847a" stroke-width="0.9"/>
<rect x="472.05" y="154.75" width="4.30" height="3.25" fill="#d8d8d0" stroke="#84847a" stroke-width="0.9"/>
<rect x="477.65" y="154.75" width="4.30" height="3.25" fill="#8a5048" stroke="#84847a" stroke-width="0.9"/>
<rect x="483.25" y="154.75" width="4.30" height="3.25" fill="#8a8088" stroke="#84847a" stroke-width="0.9"/>
<rect x="488.85" y="154.75" width="4.30" height="3.25" fill="#4a5068" stroke="#84847a" stroke-width="0.9"/>
<rect x="472.05" y="159.30" width="4.30" height="3.25" fill="#7a8070" stroke="#84847a" stroke-width="0.9"/>
<rect x="477.65" y="159.30" width="4.30" height="3.25" fill="#4a3838" stroke="#84847a" stroke-width="0.9"/>
<rect x="483.25" y="159.30" width="4.30" height="3.25" fill="#a0a098" stroke="#84847a" stroke-width="0.9"/>
<rect x="488.85" y="159.30" width="4.30" height="3.25" fill="#30384a" stroke="#84847a" stroke-width="0.9"/>
<rect x="433.45" y="169.85" width="4.43" height="3.46" fill="#a8c0b0" stroke="#84847a" stroke-width="0.9"/>
<rect x="439.18" y="169.85" width="4.43" height="3.46" fill="#fbfbf8" stroke="#84847a" stroke-width="0.9"/>
<rect x="444.92" y="169.85" width="4.43" height="3.46" fill="#fbfbf8" stroke="#84847a" stroke-width="0.9"/>
<rect x="433.45" y="174.61" width="4.43" height="3.46" fill="#98b8b8" stroke="#84847a" stroke-width="0.9"/>
<rect x="439.18" y="174.61" width="4.43" height="3.46" fill="#fbfbf8" stroke="#84847a" stroke-width="0.9"/>
<rect x="444.92" y="174.61" width="4.43" height="3.46" fill="#f8f8f4" stroke="#84847a" stroke-width="0.9"/>
<rect x="433.45" y="179.37" width="4.43" height="3.46" fill="#7aa8a8" stroke="#84847a" stroke-width="0.9"/>
<rect x="439.18" y="179.37" width="4.43" height="3.46" fill="#b0c8e0" stroke="#84847a" stroke-width="0.9"/>
<rect x="444.92" y="179.37" width="4.43" height="3.46" fill="#e0e0f0" stroke="#84847a" stroke-width="0.9"/>
<rect x="433.45" y="184.13" width="4.43" height="3.46" fill="#5a9898" stroke="#84847a" stroke-width="0.9"/>
<rect x="439.18" y="184.13" width="4.43" height="3.46" fill="#98b0d8" stroke="#84847a" stroke-width="0.9"/>
<rect x="444.92" y="184.13" width="4.43" height="3.46" fill="#e8d8d8" stroke="#84847a" stroke-width="0.9"/>
<rect x="433.45" y="188.89" width="4.43" height="3.46" fill="#5a7878" stroke="#84847a" stroke-width="0.9"/>
<rect x="439.18" y="188.89" width="4.43" height="3.46" fill="#4a4848" stroke="#84847a" stroke-width="0.9"/>
<rect x="444.92" y="188.89" width="4.43" height="3.46" fill="#b0a8b8" stroke="#84847a" stroke-width="0.9"/>
<rect x="452.85" y="169.85" width="4.43" height="3.46" fill="#fbfbf6" stroke="#84847a" stroke-width="0.9"/>
<rect x="458.58" y="169.85" width="4.43" height="3.46" fill="#f8f8f2" stroke="#84847a" stroke-width="0.9"/>
<rect x="464.32" y="169.85" width="4.43" height="3.46" fill="#e8e0b0" stroke="#84847a" stroke-width="0.9"/>
<rect x="452.85" y="174.61" width="4.43" height="3.46" fill="#f0f0ea" stroke="#84847a" stroke-width="0.9"/>
<rect x="458.58" y="174.61" width="4.43" height="3.46" fill="#e0e0d8" stroke="#84847a" stroke-width="0.9"/>
<rect x="464.32" y="174.61" width="4.43" height="3.46" fill="#e8dcb0" stroke="#84847a" stroke-width="0.9"/>
<rect x="452.85" y="179.37" width="4.43" height="3.46" fill="#a8a090" stroke="#84847a" stroke-width="0.9"/>
<rect x="458.58" y="179.37" width="4.43" height="3.46" fill="#585048" stroke="#84847a" stroke-width="0.9"/>
<rect x="464.32" y="179.37" width="4.43" height="3.46" fill="#e0d8a8" stroke="#84847a" stroke-width="0.9"/>
<rect x="452.85" y="184.13" width="4.43" height="3.46" fill="#7a6860" stroke="#84847a" stroke-width="0.9"/>
<rect x="458.58" y="184.13" width="4.43" height="3.46" fill="#484040" stroke="#84847a" stroke-width="0.9"/>
<rect x="464.32" y="184.13" width="4.43" height="3.46" fill="#e0d8a8" stroke="#84847a" stroke-width="0.9"/>
<rect x="452.85" y="188.89" width="4.43" height="3.46" fill="#381818" stroke="#84847a" stroke-width="0.9"/>
<rect x="458.58" y="188.89" width="4.43" height="3.46" fill="#403838" stroke="#84847a" stroke-width="0.9"/>
<rect x="464.32" y="188.89" width="4.43" height="3.46" fill="#d8d0a0" stroke="#84847a" stroke-width="0.9"/>
<rect x="512.40" y="168.40" width="2.00" height="68.00" fill="#c8c8c8" />
<rect x="467.00" y="234.40" width="47.40" height="2.00" fill="#c8c8c8" />
<rect x="465.00" y="166.40" width="47.40" height="68.00" fill="none" stroke="#8e8e8e" stroke-width="0.7"/>
<g opacity="0.9">
<use href="#ht" transform="translate(375.60,144.00) scale(0.8189,0.8414)" fill="none" stroke="#1a1a1a" stroke-width="1.02" />
<use href="#msl" transform="translate(378.00,173.00) scale(0.8208,0.8276)" />
<use href="#csl" transform="translate(376.60,187.80) scale(0.7640,0.7000)" />
<use href="#csl" transform="translate(337.00,199.40) scale(0.8404,0.8167)" />
<use href="#msl" transform="translate(421.80,206.60) scale(0.8000,0.8138)" />
<use href="#dr" transform="translate(417.72,228.40) scale(0.9500,0.9500)" />
<use href="#tr" transform="translate(395.39,238.60) scale(0.7000,0.7000)" />
<use href="#mo" transform="translate(377.60,242.00) scale(0.8371,0.8673)" fill="none" stroke="#1a1a1a" stroke-width="1.00" />
<use href="#lb" transform="translate(381.80,265.20) scale(0.8270,0.8286)" />
<use href="#lo" transform="translate(381.80,285.00) scale(0.8352,0.9000)" fill="none" stroke="#1a1a1a" stroke-width="0.98" />
<line x1="381.80" y1="285.45" x2="412.20" y2="285.45" stroke="#333" stroke-width="1.17" />
<use href="#vrl" transform="translate(397.60,309.40) scale(0.8400,0.8400)" />
<use href="#mo" transform="translate(534.40,176.80) scale(0.8247,0.8367)" fill="none" stroke="#1a1a1a" stroke-width="1.02" />
<use href="#csl" transform="translate(490.00,202.00) scale(0.8090,0.8333)" />
<use href="#msl" transform="translate(583.00,210.00) scale(0.8042,0.8276)" />
<use href="#lb" transform="translate(538.00,246.00) scale(0.8324,0.8143)" />
<use href="#vrl" transform="translate(552.00,271.40) scale(0.8400,0.8400)" />
<use href="#dr" transform="translate(520.02,230.60) scale(0.9500,0.9500)" />
<use href="#tr" transform="translate(513.67,236.60) scale(0.7500,0.7500)" />
</g>
<g transform="translate(375.90,199.00) scale(0.5164,0.5081)"><g clip-path="url(#hm)"><use href="#scene2"/><path d="M6.6,45.2 L40.2,73.9 L33,73.9 L3,50 Z" fill="#fff" opacity="0.5"/><path d="M75.4,45.2 L40.2,73.9 L47,73.9 L79,50 Z" fill="#fff" opacity="0.5"/></g><path d="M39.4,55.6 L41,55.6 L42.8,62 L43,69 L40.3,74.4 L37.6,69 L37.8,62Z" fill="#2b2b33"/></g>
<g transform="translate(532.60,201.00) scale(0.5238,0.5135)"><g clip-path="url(#hm)"><use href="#scene2"/><path d="M6.6,45.2 L40.2,73.9 L33,73.9 L3,50 Z" fill="#fff" opacity="0.5"/><path d="M75.4,45.2 L40.2,73.9 L47,73.9 L79,50 Z" fill="#fff" opacity="0.5"/></g><path d="M39.4,55.6 L41,55.6 L42.8,62 L43,69 L40.3,74.4 L37.6,69 L37.8,62Z" fill="#2b2b33"/></g>
<g transform="translate(463.5,252.8)"><path d="M20.3,7.9 L16.6,4.1 L12.2,1 L7.8,0.8 L3.4,3.5 L0.5,7.9 L0,12.3 L1.5,17.3 L5.3,23.6 L9,27.4 L12.8,30.5 L17.2,32.6 L20.6,33.6 L24.7,32.1 L29.1,29.6 L33.5,25.5 L37.3,20.5 L40.7,16.1 L42.3,11 L41.4,6 L38.5,2.3 L34.1,0.4 L29.1,0.8 L24.7,4.1 L22.2,6.6 Z" fill="#9bb3e4"/><path d="M20.7,29.8 L22,33.8 L20.9,38 L19.5,33.8 Z" fill="#39404f"/></g>
<rect x="650.70" y="41.40" width="373.30" height="346.00" fill="#ffffff" />
<rect x="650.70" y="41.40" width="123.60" height="112.60" fill="#6b5147" />
<rect x="774.00" y="41.40" width="124.60" height="112.60" fill="#7f7f7f" />
<rect x="898.30" y="41.40" width="124.50" height="112.60" fill="#5c8885" />
<rect x="650.70" y="153.70" width="123.60" height="112.40" fill="#2f3542" />
<rect x="774.00" y="153.70" width="124.60" height="112.40" fill="#b35d4e" />
<rect x="898.30" y="153.70" width="124.50" height="112.40" fill="#4e4a4b" />
<rect x="650.70" y="265.80" width="123.60" height="112.10" fill="#465054" />
<rect x="774.00" y="265.80" width="124.60" height="112.10" fill="#5c6549" />
<rect x="898.30" y="265.80" width="124.50" height="112.10" fill="#7a4a42" />
<g transform="translate(672.20,44.60) scale(0.9988,1.0054)"><g clip-path="url(#hc)"><use href="#scene"/></g>
<use href="#rocks"/>
<use href="#person" fill="#4d4d4d"/></g>
<g transform="translate(795.50,44.60) scale(0.9988,1.0054)"><g clip-path="url(#hc)"><use href="#scene"/></g>
<use href="#rocks"/>
<use href="#person" fill="#4d4d4d"/></g>
<g transform="translate(919.80,44.60) scale(0.9988,1.0054)"><g clip-path="url(#hc)"><use href="#scene"/></g>
<use href="#rocks"/>
<use href="#person" fill="#4d4d4d"/></g>
<g transform="translate(672.20,156.90) scale(0.9988,1.0054)"><g clip-path="url(#hc)"><use href="#scene"/></g>
<use href="#rocks"/>
<use href="#person" fill="#4d4d4d"/></g>
<g transform="translate(795.50,156.90) scale(0.9988,1.0054)"><g clip-path="url(#hc)"><use href="#scene"/></g>
<use href="#rocks"/>
<use href="#person" fill="#4d4d4d"/></g>
<g transform="translate(919.80,156.90) scale(0.9988,1.0054)"><g clip-path="url(#hc)"><use href="#scene"/></g>
<use href="#rocks"/>
<use href="#person" fill="#4d4d4d"/></g>
<g transform="translate(672.20,269.00) scale(0.9988,1.0054)"><g clip-path="url(#hc)"><use href="#scene"/></g>
<use href="#rocks"/>
<use href="#person" fill="#4d4d4d"/></g>
<g transform="translate(795.50,269.00) scale(0.9988,1.0054)"><g clip-path="url(#hc)"><use href="#scene"/></g>
<use href="#rocks"/>
<use href="#person" fill="#4d4d4d"/></g>
<g transform="translate(919.80,269.00) scale(0.9988,1.0054)"><g clip-path="url(#hc)"><use href="#scene"/></g>
<use href="#rocks"/>
<use href="#person" fill="#4d4d4d"/></g>
<rect x="787.00" y="384.20" width="227.00" height="19.60" fill="#c2c2c2" />
<text x="797.00" y="398.40" font-size="11.2" fill="#f6f6f6" textLength="206" lengthAdjust="spacingAndGlyphs">ID:25754653 NO:20200615222622426039</text>
</svg></body></html>
